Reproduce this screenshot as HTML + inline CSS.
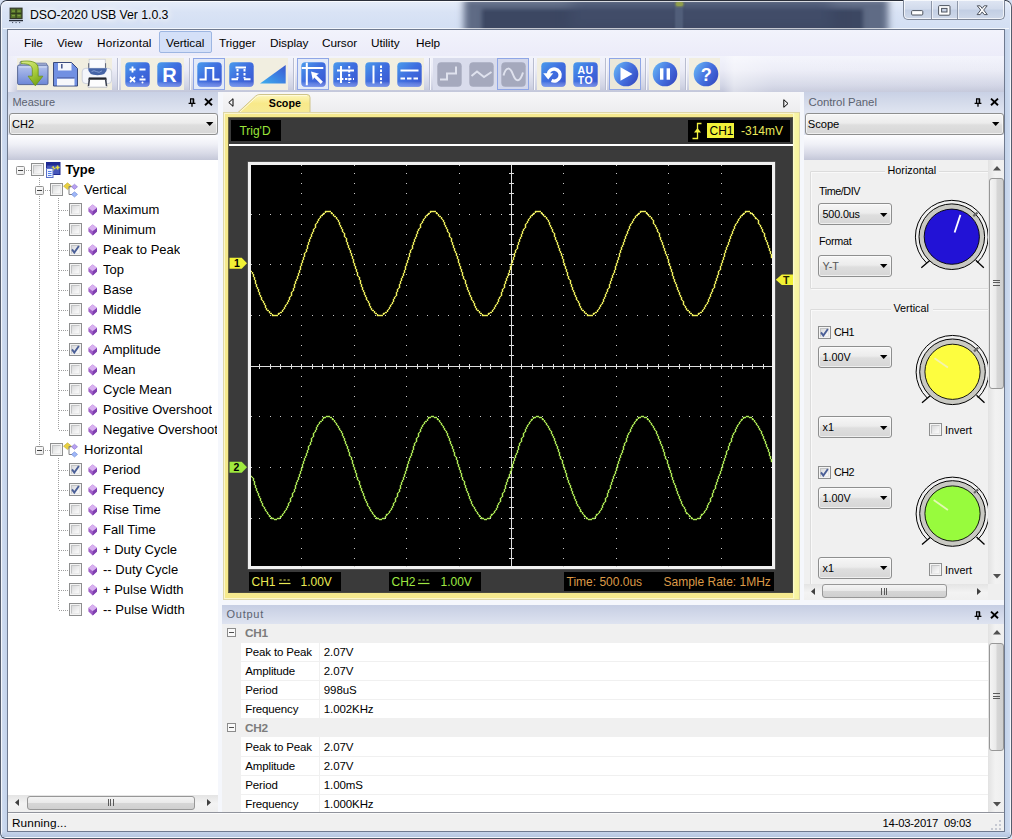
<!DOCTYPE html>
<html><head><meta charset="utf-8"><title>DSO-2020 USB Ver 1.0.3</title>
<style>
html,body{margin:0;padding:0;}
body{width:1012px;height:839px;overflow:hidden;position:relative;background:#d6e0f2;font-family:"Liberation Sans","DejaVu Sans",sans-serif;font-size:12px;color:#000;}
div{position:absolute;box-sizing:border-box;}
svg{position:absolute;overflow:visible;}
.t{white-space:nowrap;line-height:16px;height:16px;}
.s{font-family:"Liberation Sans",sans-serif;font-size:11.8px;letter-spacing:-0.05px;}
.tr{font-family:"Liberation Sans",sans-serif;font-size:13px;}
.a{font-family:"Liberation Sans",sans-serif;font-size:12px;}
.c{font-family:"Liberation Sans",sans-serif;font-size:10.8px;}
.b{font-weight:bold;}
</style></head>
<body>
<div style="left:0px;top:0px;width:1012px;height:839px;background:#cfdcf0;border-radius:7px 7px 6px 6px;"></div>
<div style="left:1px;top:1px;width:1010px;height:28px;border-radius:6px 6px 0 0;overflow:hidden;background:linear-gradient(180deg,#e6edf9 0,#d9e3f5 40%,#d3dff3 100%);"><div style="left:471px;top:5px;width:408px;height:30px;background:#5f6b85;box-shadow:0 0 7px 8px #5f6b85;"></div><div style="left:484px;top:11px;width:375px;height:24px;background:#3c4762;box-shadow:0 0 4px 3px #3c4762;"></div><div style="left:580px;top:10px;width:240px;height:8px;background:#434f6c;box-shadow:0 0 14px 10px #434f6c;opacity:.7;"></div><div style="left:675px;top:4px;width:6px;height:24px;background:#56637f;box-shadow:0 0 2px 1px #56637f;opacity:.8;"></div><div style="left:674.5px;top:1px;width:7px;height:3.5px;background:#97a548;box-shadow:0 0 2px 1px #7f8d52;border-radius:2px;opacity:.9;"></div></div>
<div style="left:0px;top:0px;width:1012px;height:839px;border:1px solid #3d4452;border-radius:7px 7px 6px 6px;border-color:#2a2f3a #555d6d #4a5262 #555d6d;"></div>
<div style="left:1px;top:1px;width:1010px;height:837px;border:1px solid rgba(255,255,255,.75);border-radius:6px;"></div>
<div style="left:2px;top:30px;width:5px;height:802px;background:linear-gradient(90deg,#cfdcf0,#c2d2ea);"></div>
<div style="left:1005px;top:30px;width:5px;height:802px;background:linear-gradient(90deg,#c2d2ea,#cfdcf0);"></div>
<div style="left:2px;top:831.5px;width:1008px;height:5.5px;background:linear-gradient(180deg,#c6d4ea,#b5c6e0);"></div>
<div style="left:3px;top:28px;width:1006px;height:1px;background:rgba(255,255,255,.7);"></div>
<div style="left:7px;top:29px;width:998px;height:803px;border:1px solid #6f7a8f;background:#f0f0f0;"></div>
<div class="t s" style="left:30px;top:7px;font-size:12.3px;text-shadow:0 0 5px #fff,0 0 9px #fff,0 0 12px rgba(255,255,255,.8);">DSO-2020 USB Ver 1.0.3</div>
<svg style="left:8px;top:7px;" width="16" height="17" viewBox="0 0 16 17"><rect x="2.2" y="1.2" width="11.8" height="10.4" fill="#53702a" stroke="#33372a" stroke-width="1.2"/>
<path d="M8.1 2v9M3 6.4h10.4" stroke="#2e3a1c" stroke-width="1"/><path d="M4 4.2h3M9.5 4.2h3M4 8.6h3M9.5 8.6h3" stroke="#7f9e3e" stroke-width="1.2"/>
<path d="M1 13.6h14" stroke="#252b36" stroke-width="1.3"/><path d="M4 15.6h1.2M7.5 15.6h1.2M11 15.6h1.2" stroke="#4a5468" stroke-width="1"/></svg>
<div style="left:902.5px;top:0px;width:102.5px;height:19.5px;border:1px solid #7e8798;border-top:none;border-radius:0 0 5px 5px;background:linear-gradient(180deg,#dfe6f3 0,#d2dbec 45%,#c3cfe4 55%,#cfd9ea 100%);box-shadow:inset 0 0 0 1px rgba(255,255,255,.7);"></div>
<div style="left:930.5px;top:1px;width:1px;height:18px;background:#8d96a8;"></div>
<div style="left:931.5px;top:1px;width:1px;height:18px;background:rgba(255,255,255,.6);"></div>
<div style="left:957px;top:1px;width:1px;height:18px;background:#8d96a8;"></div>
<div style="left:958px;top:1px;width:1px;height:18px;background:rgba(255,255,255,.6);"></div>
<svg style="left:911px;top:9.5px;" width="13" height="6" viewBox="0 0 13 6"><rect x=".6" y=".6" width="11.2" height="4.4" rx="1" fill="#fff" stroke="#4e545f" stroke-width="1"/></svg>
<svg style="left:937.5px;top:4.5px;" width="13" height="11" viewBox="0 0 13 11"><rect x=".6" y=".6" width="11.4" height="9.6" rx="1" fill="#fff" stroke="#4e545f" stroke-width="1"/><rect x="3.6" y="3.4" width="5.4" height="3.6" fill="#c9d3e6" stroke="#4e545f" stroke-width="1"/></svg>
<svg style="left:975.5px;top:4.8px;" width="13" height="11" viewBox="0 0 13 11"><path d="M1.2 .8h3l2 2.6 2-2.6h3L7.7 5l3.6 4.6h-3.1L6.2 6.9 4.2 9.6H1.1L4.7 5z" fill="#fff" stroke="#4e545f" stroke-width="1" stroke-linejoin="round"/></svg>
<div style="left:8px;top:30px;width:996px;height:26px;background:linear-gradient(180deg,#f2f3fc,#ececf9);"></div>
<div style="left:159px;top:31px;width:53px;height:22px;background:#d4e0f8;border:1px solid #9db6e2;border-radius:2px;"></div>
<div class="t s" style="left:24px;top:35px;">File</div>
<div class="t s" style="left:57px;top:35px;">View</div>
<div class="t s" style="left:97px;top:35px;letter-spacing:.15px;">Horizontal</div>
<div class="t s" style="left:166px;top:35px;">Vertical</div>
<div class="t s" style="left:219px;top:35px;">Trigger</div>
<div class="t s" style="left:270px;top:35px;">Display</div>
<div class="t s" style="left:322px;top:35px;">Cursor</div>
<div class="t s" style="left:371px;top:35px;">Utility</div>
<div class="t s" style="left:416px;top:35px;">Help</div>
<div style="left:8px;top:56px;width:996px;height:36px;background:linear-gradient(90deg,rgba(255,255,255,0) 715px,rgba(255,255,255,.4) 726px,rgba(255,255,255,.12) 765px,rgba(255,255,255,.03) 100%),linear-gradient(180deg,#f3f4fc 0,#eaebf6 40%,#d3d6e6 80%,#c3c7da 100%);"></div>
<div style="left:8px;top:56px;width:10px;height:36px;background:linear-gradient(90deg,#eeeef8,rgba(238,238,248,0));"></div>
<div style="left:17px;top:58px;width:95px;height:31.5px;background:#f1eee0;"></div>
<div style="left:121px;top:58px;width:63px;height:31.5px;background:#f1eee0;"></div>
<div style="left:193px;top:58px;width:95px;height:31.5px;background:#f1eee0;"></div>
<div style="left:297px;top:58px;width:127px;height:31.5px;background:#f1eee0;"></div>
<div style="left:433px;top:58px;width:95px;height:31.5px;background:#d9dcec;"></div>
<div style="left:537px;top:58px;width:63px;height:31.5px;background:#f1eee0;"></div>
<div style="left:609px;top:58px;width:31px;height:31.5px;background:#f1eee0;"></div>
<div style="left:649px;top:58px;width:31px;height:31.5px;background:#f1eee0;"></div>
<div style="left:689px;top:58px;width:31px;height:31.5px;background:#f1eee0;"></div>
<div style="left:117px;top:58px;width:1px;height:32px;background:#b9bdd0;"></div>
<div style="left:118px;top:58px;width:1px;height:32px;background:#f6f7fd;"></div>
<div style="left:189px;top:58px;width:1px;height:32px;background:#b9bdd0;"></div>
<div style="left:190px;top:58px;width:1px;height:32px;background:#f6f7fd;"></div>
<div style="left:293px;top:58px;width:1px;height:32px;background:#b9bdd0;"></div>
<div style="left:294px;top:58px;width:1px;height:32px;background:#f6f7fd;"></div>
<div style="left:429px;top:58px;width:1px;height:32px;background:#b9bdd0;"></div>
<div style="left:430px;top:58px;width:1px;height:32px;background:#f6f7fd;"></div>
<div style="left:533px;top:58px;width:1px;height:32px;background:#b9bdd0;"></div>
<div style="left:534px;top:58px;width:1px;height:32px;background:#f6f7fd;"></div>
<div style="left:605px;top:58px;width:1px;height:32px;background:#b9bdd0;"></div>
<div style="left:606px;top:58px;width:1px;height:32px;background:#f6f7fd;"></div>
<div style="left:645px;top:58px;width:1px;height:32px;background:#b9bdd0;"></div>
<div style="left:646px;top:58px;width:1px;height:32px;background:#f6f7fd;"></div>
<div style="left:685px;top:58px;width:1px;height:32px;background:#b9bdd0;"></div>
<div style="left:686px;top:58px;width:1px;height:32px;background:#f6f7fd;"></div>
<div style="left:193px;top:58px;width:32px;height:32px;background:#e3eaf8;border:1px solid #8fa6e6;"></div>
<div style="left:297px;top:58px;width:32px;height:32px;background:#e3eaf8;border:1px solid #8fa6e6;"></div>
<div style="left:497px;top:58px;width:32px;height:32px;background:#d3d7ea;border:1px solid #8fa6e6;"></div>
<div style="left:609px;top:58px;width:32px;height:32px;background:#ebe8da;border:1px solid #8fa6e6;"></div>
<svg width="0" height="0" style="left:0;top:0"><defs>
<linearGradient id="gb" x1="0" y1="0" x2="1" y2="1"><stop offset="0" stop-color="#4a9cec"/><stop offset=".45" stop-color="#3f6fe0"/><stop offset="1" stop-color="#3a55cf"/></linearGradient>
<linearGradient id="gbb" x1="0" y1="0" x2="0" y2="1"><stop offset="0" stop-color="#fff" stop-opacity="0"/><stop offset=".78" stop-color="#fff" stop-opacity="0"/><stop offset="1" stop-color="#9ab4ff" stop-opacity=".55"/></linearGradient>
<linearGradient id="gc" x1="0" y1=".2" x2="1" y2=".8"><stop offset="0" stop-color="#66b4f4"/><stop offset=".5" stop-color="#4672e0"/><stop offset="1" stop-color="#3448c0"/></linearGradient>
<linearGradient id="gr" x1="0" y1="1" x2="1" y2="0"><stop offset="0" stop-color="#3fb0ee"/><stop offset=".6" stop-color="#3c7ae0"/><stop offset="1" stop-color="#3a58cc"/></linearGradient>
<linearGradient id="gf" x1="0" y1="0" x2="0" y2="1"><stop offset="0" stop-color="#b6c4ec"/><stop offset="1" stop-color="#6d87d8"/></linearGradient>
<linearGradient id="gar" x1="0" y1="0" x2=".6" y2="1"><stop offset="0" stop-color="#dcec8c"/><stop offset=".55" stop-color="#aed040"/><stop offset="1" stop-color="#7aa81a"/></linearGradient>
</defs></svg>
<svg style="left:17px;top:58px;" width="32" height="32" viewBox="0 0 32 32"><path d="M3 8.5V4.7q0-1.2 1.3-1.2h8l2 1.7h14.3q1.2 0 1.2 1.2v2.1z" fill="#c3cef0" stroke="#55659a" stroke-width=".8"/>
<rect x=".6" y="7.1" width="30.4" height="19.5" rx="1.3" fill="url(#gf)" stroke="#4c5c90" stroke-width=".9"/>
<path d="M2.2 9h27.4" stroke="#dfe6f8" stroke-width="1" opacity=".8"/>
<path d="M4 3.4C12 2.3 21.2 3 21.2 10.5V18.2H25.9L18.3 27.8L11.1 18.2H15.3V11.5C15.3 7.3 11 5.6 4 5.6Z" fill="url(#gar)" stroke="#6d9418" stroke-width=".8" stroke-linejoin="round"/></svg>
<svg style="left:49px;top:58px;" width="32" height="32" viewBox="0 0 32 32"><path d="M4.5 4.5 h18 l6 6 v17.5 h-24z" fill="#7190e2" stroke="#3a4a7c" stroke-width="1"/>
<rect x="9" y="5" width="13.5" height="7.5" fill="#f4f6fc"/><rect x="12" y="6" width="1.6" height="4.5" fill="#4a5a90"/>
<rect x="8" y="20.5" width="17.5" height="7" fill="#f6f7fb"/><rect x="8" y="19" width="17.5" height="1.5" fill="#5a70b8"/></svg>
<svg style="left:81px;top:58px;" width="32" height="32" viewBox="0 0 32 32"><rect x="8.1" y="1.2" width="16.1" height="9.4" fill="#fafbfe" stroke="#bcc0cc" stroke-width=".6"/>
<path d="M7.7 5.2V10.5M24.6 5.2V10.5" stroke="#5a6274" stroke-width="1"/>
<rect x="1.2" y="10.3" width="29.4" height="15.3" rx="3.6" fill="#f4f6fb" stroke="#c2c7d6" stroke-width=".8"/>
<path d="M7.1 10.3H25.9Q25.9 17.3 16.5 17.3Q7.1 17.3 7.1 10.3Z" fill="#4564a6"/>
<path d="M10.5 13.6q2.5-1.8 5 0t5.5-.8" fill="none" stroke="#90a8dc" stroke-width=".8"/>
<path d="M8.2 19.8H24.8L26 29.2H7Z" fill="#fdfdfe" stroke="#9aa0b0" stroke-width=".6"/>
<path d="M7.8 19.6h17.4l.5 2.1H7.3z" fill="#22262e"/>
<path d="M8.4 21.3L7.5 28M24.6 21.3L25.5 28" stroke="#3a4050" stroke-width="1.5"/></svg>
<svg style="left:125px;top:62px;" width="25" height="25" viewBox="0 0 25 25"><rect x=".3" y=".3" width="24.4" height="24.4" rx="4" fill="url(#gb)"/><rect x=".3" y=".3" width="24.4" height="24.4" rx="4" fill="url(#gbb)"/><g stroke="#fff" stroke-width="1.8" fill="none"><path d="M4.5 7.5h6M7.5 4.5v6M14.5 7.5h6M5 15l5 5M10 15l-5 5M14.5 17.5h6"/></g><circle cx="17.5" cy="14.6" r="1" fill="#fff"/><circle cx="17.5" cy="20.4" r="1" fill="#fff"/></svg>
<svg style="left:157px;top:62px;" width="25" height="25" viewBox="0 0 25 25"><rect x=".3" y=".3" width="24.4" height="24.4" rx="4" fill="url(#gb)"/><rect x=".3" y=".3" width="24.4" height="24.4" rx="4" fill="url(#gbb)"/><text x="12.6" y="20.2" text-anchor="middle" font-family="Liberation Sans, sans-serif" font-weight="bold" font-size="20" fill="#fff">R</text></svg>
<svg style="left:197px;top:62px;" width="25" height="25" viewBox="0 0 25 25"><rect x=".3" y=".3" width="24.4" height="24.4" rx="4" fill="url(#gb)"/><rect x=".3" y=".3" width="24.4" height="24.4" rx="4" fill="url(#gbb)"/><path d="M2.5 17.5h6.2v-11.5h7.6v11.5h6.2" fill="none" stroke="#fff" stroke-width="2"/></svg>
<svg style="left:229px;top:62px;" width="25" height="25" viewBox="0 0 25 25"><rect x=".3" y=".3" width="24.4" height="24.4" rx="4" fill="url(#gb)"/><rect x=".3" y=".3" width="24.4" height="24.4" rx="4" fill="url(#gbb)"/><path d="M6.5 5.5h10.5" fill="none" stroke="#fff" stroke-width="2"/><path d="M2.5 17.2h6.5M15 17.2h6.5" fill="none" stroke="#fff" stroke-width="2"/><path d="M8.5 7v9.5M15.5 7v9.5" fill="none" stroke="#fff" stroke-width="2" stroke-dasharray="2.4 1.6"/></svg>
<svg style="left:257px;top:58px;" width="32" height="32" viewBox="0 0 32 32"><path d="M3 25.5 L28.7 25.5 L28.7 7z" fill="url(#gr)"/></svg>
<svg style="left:301px;top:61.5px;" width="25" height="25" viewBox="0 0 25 25"><rect x=".3" y=".3" width="24.4" height="24.4" rx="4" fill="url(#gb)"/><rect x=".3" y=".3" width="24.4" height="24.4" rx="4" fill="url(#gbb)"/><path d="M5.8 .8v22.5M.8 6h21.5" fill="none" stroke="#fff" stroke-width="2"/><path d="M10 9.5l8 2.2-2.6 1.6 6.5 6.5-2.2 2.2-6.5-6.5-1.4 2.4z" fill="#fff"/></svg>
<svg style="left:333px;top:62px;" width="25" height="25" viewBox="0 0 25 25"><rect x=".3" y=".3" width="24.4" height="24.4" rx="4" fill="url(#gb)"/><rect x=".3" y=".3" width="24.4" height="24.4" rx="4" fill="url(#gbb)"/><path d="M8 4v17M4 8.5h17" fill="none" stroke="#fff" stroke-width="2"/><path d="M16.2 4v17M4 17h17" fill="none" stroke="#fff" stroke-width="2" stroke-dasharray="2.4 1.6"/></svg>
<svg style="left:365px;top:62px;" width="25" height="25" viewBox="0 0 25 25"><rect x=".3" y=".3" width="24.4" height="24.4" rx="4" fill="url(#gb)"/><rect x=".3" y=".3" width="24.4" height="24.4" rx="4" fill="url(#gbb)"/><path d="M8.5 3.5v18" fill="none" stroke="#fff" stroke-width="2"/><path d="M16 3.5v18" fill="none" stroke="#fff" stroke-width="2" stroke-dasharray="2.4 1.6"/></svg>
<svg style="left:397px;top:62px;" width="25" height="25" viewBox="0 0 25 25"><rect x=".3" y=".3" width="24.4" height="24.4" rx="4" fill="url(#gb)"/><rect x=".3" y=".3" width="24.4" height="24.4" rx="4" fill="url(#gbb)"/><path d="M3.5 8.5h18" fill="none" stroke="#fff" stroke-width="2"/><path d="M3.5 16.5h18" fill="none" stroke="#fff" stroke-width="2" stroke-dasharray="4.5 2"/></svg>
<svg style="left:437px;top:62px;" width="25" height="25" viewBox="0 0 25 25"><rect x=".3" y=".3" width="24.4" height="24.4" rx="4" fill="#a5a9bd"/><path d="M3 17.5h7v-6h9v-7" fill="none" stroke="#dfe2ee" stroke-width="2"/></svg>
<svg style="left:469px;top:62px;" width="25" height="25" viewBox="0 0 25 25"><rect x=".3" y=".3" width="24.4" height="24.4" rx="4" fill="#a5a9bd"/><path d="M2.5 14l5.5-4.5 7 5.5 7.5-5" fill="none" stroke="#dfe2ee" stroke-width="2" stroke-width="1.7"/></svg>
<svg style="left:501px;top:62px;" width="25" height="25" viewBox="0 0 25 25"><rect x=".3" y=".3" width="24.4" height="24.4" rx="4" fill="#a5a9bd"/><path d="M2.5 13.5c2.5-9 6.5-9 9.5-1s7 8 10-2" fill="none" stroke="#dfe2ee" stroke-width="2" stroke-width="1.7"/></svg>
<svg style="left:541px;top:62px;" width="25" height="25" viewBox="0 0 25 25"><rect x=".3" y=".3" width="24.4" height="24.4" rx="4" fill="url(#gb)"/><rect x=".3" y=".3" width="24.4" height="24.4" rx="4" fill="url(#gbb)"/><path d="M7.2 12.5a6 6 0 1 1 3.4 6" fill="none" stroke="#fff" stroke-width="3.4"/><path d="M2.2 11.2h10l-5 6.3z" fill="#fff"/></svg>
<svg style="left:573px;top:62px;" width="25" height="25" viewBox="0 0 25 25"><rect x=".3" y=".3" width="24.4" height="24.4" rx="4" fill="url(#gb)"/><rect x=".3" y=".3" width="24.4" height="24.4" rx="4" fill="url(#gbb)"/><text x="12.6" y="11.6" text-anchor="middle" font-family="Liberation Sans, sans-serif" font-weight="bold" font-size="10.5" fill="#fff" letter-spacing=".6">AU</text><text x="12.6" y="21.6" text-anchor="middle" font-family="Liberation Sans, sans-serif" font-weight="bold" font-size="10.5" fill="#fff" letter-spacing=".6">TO</text></svg>
<svg style="left:612.5px;top:61px;" width="26" height="26" viewBox="0 0 26 26"><circle cx="13" cy="13" r="12.3" fill="url(#gc)"/><path d="M7.5 6.2v13.6l12-6.8z" fill="#fff"/></svg>
<svg style="left:652px;top:61px;" width="26" height="26" viewBox="0 0 26 26"><circle cx="13" cy="13" r="12.3" fill="url(#gc)"/><rect x="8" y="7.3" width="3.4" height="11.4" fill="#fff"/><rect x="14.6" y="7.3" width="3.4" height="11.4" fill="#fff"/></svg>
<svg style="left:692.5px;top:61px;" width="26" height="26" viewBox="0 0 26 26"><circle cx="13" cy="13" r="12.3" fill="url(#gc)"/><text x="13.2" y="19.8" text-anchor="middle" font-family="Liberation Sans, sans-serif" font-weight="bold" font-size="18" fill="#fff">?</text></svg>
<div style="left:8px;top:92px;width:210px;height:720px;background:#fff;"></div>
<div style="left:217px;top:92px;width:5.5px;height:720px;background:#f5f7fc;"></div>
<div style="left:217px;top:159.5px;width:1px;height:652px;background:#ccd0da;"></div>
<div style="left:8px;top:92px;width:210px;height:20px;background:linear-gradient(180deg,#c9d1e5,#dfe4f0);"></div>
<div class="t s" style="left:12.5px;top:94px;color:#5b6270;font-size:11px;">Measure</div>
<svg style="left:188px;top:98.4px;" width="8" height="9" viewBox="0 0 8 9"><path d="M2 .8h4M2.6 .8v4.2M5.6 .8v4.2M.6 5.4h6.8M4 5.4v3.4" fill="none" stroke="#000" stroke-width="1.3"/><rect x="4.6" y="1" width="1.2" height="4" fill="#000"/></svg>
<svg style="left:204px;top:98.4px;" width="9" height="8" viewBox="0 0 9 8"><path d="M1 .6l7 6.6M8 .6l-7 6.6" fill="none" stroke="#000" stroke-width="1.9"/></svg>
<div style="left:8px;top:112px;width:210px;height:23px;background:#dfe4f0;"></div>
<div style="left:8.5px;top:112.5px;width:209px;height:22px;border:1px solid #8e8f8f;border-radius:3px;background:linear-gradient(180deg,#f6f6f6 0,#ececec 45%,#dedede 55%,#d6d6d6 100%);box-shadow:inset 0 0 0 1px rgba(255,255,255,.6);"></div>
<div class="t a" style="left:12.0px;top:115.5px;font-size:11px;">CH2</div>
<svg style="left:206px;top:121.9px;" width="8" height="4" viewBox="0 0 8 4"><path d="M0 0h7.4l-3.7 4z" fill="#000"/></svg>
<div style="left:8px;top:134.5px;width:210px;height:25px;background:linear-gradient(180deg,#fdfdff 0,#f0f1f7 35%,#d7d9e6 75%,#c4c7d8 100%);"></div>
<div style="left:8px;top:159.5px;width:210px;height:636px;background:#fff;"></div>
<div style="left:39px;top:178px;width:1px;height:268px;background:repeating-linear-gradient(180deg,#a0a0a0 0,#a0a0a0 1px,transparent 1px,transparent 2px);"></div>
<div style="left:58px;top:198px;width:1px;height:232px;background:repeating-linear-gradient(180deg,#a0a0a0 0,#a0a0a0 1px,transparent 1px,transparent 2px);"></div>
<div style="left:58px;top:458px;width:1px;height:152px;background:repeating-linear-gradient(180deg,#a0a0a0 0,#a0a0a0 1px,transparent 1px,transparent 2px);"></div>
<div style="left:26px;top:170px;width:5px;height:1px;background:repeating-linear-gradient(90deg,#a0a0a0 0,#a0a0a0 1px,transparent 1px,transparent 2px);"></div>
<div style="left:45px;top:190px;width:5px;height:1px;background:repeating-linear-gradient(90deg,#a0a0a0 0,#a0a0a0 1px,transparent 1px,transparent 2px);"></div>
<div style="left:45px;top:450px;width:5px;height:1px;background:repeating-linear-gradient(90deg,#a0a0a0 0,#a0a0a0 1px,transparent 1px,transparent 2px);"></div>
<div style="left:8px;top:159.5px;width:209px;height:636px;overflow:hidden;"><!--tree--></div>
<div style="left:16px;top:166px;width:9px;height:9px;border:1px solid #919191;border-radius:1.5px;background:linear-gradient(135deg,#fff,#e8e8e8);"></div>
<div style="left:18px;top:170px;width:5px;height:1px;background:#404040;"></div>
<div style="left:31px;top:163px;width:13px;height:13px;border:1px solid #8e8f8f;background:#f4f4f4;"></div>
<div style="left:33px;top:165px;width:9px;height:9px;background:linear-gradient(135deg,#d9dadb,#f6f6f6 80%);border:1px solid #c3c4c5;border-right-color:#e8e8e8;border-bottom-color:#e8e8e8;"></div>
<svg style="left:45px;top:162px;" width="16" height="16" viewBox="0 0 16 16"><rect x="1.5" y=".5" width="13.5" height="12" fill="#4656ba" stroke="#1f2b92" stroke-width="1"/><rect x="1.5" y=".5" width="13.5" height="3" fill="#1f2b92"/><path d="M6 6.5h4.4M8.2 4.3v4.4M10.6 5.5h4M12.6 3.5v4" stroke="#e6df3c" stroke-width="1.5"/><rect x="1.5" y="6.5" width="6.5" height="9" fill="#eef2ff" stroke="#5a70c8" stroke-width="1"/><path d="M3 9.5h3.5M3 11.5h3.5M3 13.5h3.5" stroke="#4f7fe6" stroke-width="1"/></svg>
<div class="t tr" style="left:65.5px;top:161.5px;font-weight:bold;">Type</div>
<div style="left:35px;top:186px;width:9px;height:9px;border:1px solid #919191;border-radius:1.5px;background:linear-gradient(135deg,#fff,#e8e8e8);"></div>
<div style="left:37px;top:190px;width:5px;height:1px;background:#404040;"></div>
<div style="left:50px;top:183px;width:13px;height:13px;border:1px solid #8e8f8f;background:#f4f4f4;"></div>
<div style="left:52px;top:185px;width:9px;height:9px;background:linear-gradient(135deg,#d9dadb,#f6f6f6 80%);border:1px solid #c3c4c5;border-right-color:#e8e8e8;border-bottom-color:#e8e8e8;"></div>
<svg style="left:63px;top:182px;" width="16" height="16" viewBox="0 0 16 16"><path d="M4.5 .8l4 3.4-4 3.4-4-3.4z" fill="#e8d040" stroke="#b8a020" stroke-width=".5"/><path d="M8.5 4.5h-2.5v8h3" fill="none" stroke="#808080" stroke-width="1"/><path d="M11.5 2.2l3 2.6-3 2.6-3-2.6z" fill="#b8a0f0" stroke="#7060c0" stroke-width=".5"/><path d="M11.5 9.8l3 2.6-3 2.6-3-2.6z" fill="#a0b8f8" stroke="#5070c8" stroke-width=".5"/></svg>
<div class="t tr" style="left:84px;top:181.5px;">Vertical</div>
<div style="left:59px;top:210px;width:10px;height:1px;background:repeating-linear-gradient(90deg,#a0a0a0 0,#a0a0a0 1px,transparent 1px,transparent 2px);"></div>
<div style="left:69px;top:203px;width:13px;height:13px;border:1px solid #8e8f8f;background:#f4f4f4;"></div>
<div style="left:71px;top:205px;width:9px;height:9px;background:linear-gradient(135deg,#d9dadb,#f6f6f6 80%);border:1px solid #c3c4c5;border-right-color:#e8e8e8;border-bottom-color:#e8e8e8;"></div>
<svg style="left:88.3px;top:204px;" width="10" height="12" viewBox="0 0 10 12"><path d="M4.7 .4L9 4v3.6L4.7 11.4.4 7.6V4z" fill="#a060c8"/><path d="M4.7 .4L9 4 4.7 7.2.4 4z" fill="#d8b0f0"/><path d="M4.7 7.2L9 4v3.6L4.7 11.4z" fill="#8040b0"/></svg>
<div class="t tr" style="left:103px;top:201.5px;max-width:114px;overflow:hidden;">Maximum</div>
<div style="left:59px;top:230px;width:10px;height:1px;background:repeating-linear-gradient(90deg,#a0a0a0 0,#a0a0a0 1px,transparent 1px,transparent 2px);"></div>
<div style="left:69px;top:223px;width:13px;height:13px;border:1px solid #8e8f8f;background:#f4f4f4;"></div>
<div style="left:71px;top:225px;width:9px;height:9px;background:linear-gradient(135deg,#d9dadb,#f6f6f6 80%);border:1px solid #c3c4c5;border-right-color:#e8e8e8;border-bottom-color:#e8e8e8;"></div>
<svg style="left:88.3px;top:224px;" width="10" height="12" viewBox="0 0 10 12"><path d="M4.7 .4L9 4v3.6L4.7 11.4.4 7.6V4z" fill="#a060c8"/><path d="M4.7 .4L9 4 4.7 7.2.4 4z" fill="#d8b0f0"/><path d="M4.7 7.2L9 4v3.6L4.7 11.4z" fill="#8040b0"/></svg>
<div class="t tr" style="left:103px;top:221.5px;max-width:114px;overflow:hidden;">Minimum</div>
<div style="left:59px;top:250px;width:10px;height:1px;background:repeating-linear-gradient(90deg,#a0a0a0 0,#a0a0a0 1px,transparent 1px,transparent 2px);"></div>
<div style="left:69px;top:243px;width:13px;height:13px;border:1px solid #8e8f8f;background:#f4f4f4;"></div>
<div style="left:71px;top:245px;width:9px;height:9px;background:linear-gradient(135deg,#d9dadb,#f6f6f6 80%);border:1px solid #c3c4c5;border-right-color:#e8e8e8;border-bottom-color:#e8e8e8;"></div>
<svg style="left:69px;top:243px;" width="13" height="13" viewBox="0 0 13 13"><path d="M3 6.4l2.3 3.2 4.6-6.6" fill="none" stroke="#4b5f97" stroke-width="1.9"/></svg>
<svg style="left:88.3px;top:244px;" width="10" height="12" viewBox="0 0 10 12"><path d="M4.7 .4L9 4v3.6L4.7 11.4.4 7.6V4z" fill="#a060c8"/><path d="M4.7 .4L9 4 4.7 7.2.4 4z" fill="#d8b0f0"/><path d="M4.7 7.2L9 4v3.6L4.7 11.4z" fill="#8040b0"/></svg>
<div class="t tr" style="left:103px;top:241.5px;max-width:114px;overflow:hidden;">Peak to Peak</div>
<div style="left:59px;top:270px;width:10px;height:1px;background:repeating-linear-gradient(90deg,#a0a0a0 0,#a0a0a0 1px,transparent 1px,transparent 2px);"></div>
<div style="left:69px;top:263px;width:13px;height:13px;border:1px solid #8e8f8f;background:#f4f4f4;"></div>
<div style="left:71px;top:265px;width:9px;height:9px;background:linear-gradient(135deg,#d9dadb,#f6f6f6 80%);border:1px solid #c3c4c5;border-right-color:#e8e8e8;border-bottom-color:#e8e8e8;"></div>
<svg style="left:88.3px;top:264px;" width="10" height="12" viewBox="0 0 10 12"><path d="M4.7 .4L9 4v3.6L4.7 11.4.4 7.6V4z" fill="#a060c8"/><path d="M4.7 .4L9 4 4.7 7.2.4 4z" fill="#d8b0f0"/><path d="M4.7 7.2L9 4v3.6L4.7 11.4z" fill="#8040b0"/></svg>
<div class="t tr" style="left:103px;top:261.5px;max-width:114px;overflow:hidden;">Top</div>
<div style="left:59px;top:290px;width:10px;height:1px;background:repeating-linear-gradient(90deg,#a0a0a0 0,#a0a0a0 1px,transparent 1px,transparent 2px);"></div>
<div style="left:69px;top:283px;width:13px;height:13px;border:1px solid #8e8f8f;background:#f4f4f4;"></div>
<div style="left:71px;top:285px;width:9px;height:9px;background:linear-gradient(135deg,#d9dadb,#f6f6f6 80%);border:1px solid #c3c4c5;border-right-color:#e8e8e8;border-bottom-color:#e8e8e8;"></div>
<svg style="left:88.3px;top:284px;" width="10" height="12" viewBox="0 0 10 12"><path d="M4.7 .4L9 4v3.6L4.7 11.4.4 7.6V4z" fill="#a060c8"/><path d="M4.7 .4L9 4 4.7 7.2.4 4z" fill="#d8b0f0"/><path d="M4.7 7.2L9 4v3.6L4.7 11.4z" fill="#8040b0"/></svg>
<div class="t tr" style="left:103px;top:281.5px;max-width:114px;overflow:hidden;">Base</div>
<div style="left:59px;top:310px;width:10px;height:1px;background:repeating-linear-gradient(90deg,#a0a0a0 0,#a0a0a0 1px,transparent 1px,transparent 2px);"></div>
<div style="left:69px;top:303px;width:13px;height:13px;border:1px solid #8e8f8f;background:#f4f4f4;"></div>
<div style="left:71px;top:305px;width:9px;height:9px;background:linear-gradient(135deg,#d9dadb,#f6f6f6 80%);border:1px solid #c3c4c5;border-right-color:#e8e8e8;border-bottom-color:#e8e8e8;"></div>
<svg style="left:88.3px;top:304px;" width="10" height="12" viewBox="0 0 10 12"><path d="M4.7 .4L9 4v3.6L4.7 11.4.4 7.6V4z" fill="#a060c8"/><path d="M4.7 .4L9 4 4.7 7.2.4 4z" fill="#d8b0f0"/><path d="M4.7 7.2L9 4v3.6L4.7 11.4z" fill="#8040b0"/></svg>
<div class="t tr" style="left:103px;top:301.5px;max-width:114px;overflow:hidden;">Middle</div>
<div style="left:59px;top:330px;width:10px;height:1px;background:repeating-linear-gradient(90deg,#a0a0a0 0,#a0a0a0 1px,transparent 1px,transparent 2px);"></div>
<div style="left:69px;top:323px;width:13px;height:13px;border:1px solid #8e8f8f;background:#f4f4f4;"></div>
<div style="left:71px;top:325px;width:9px;height:9px;background:linear-gradient(135deg,#d9dadb,#f6f6f6 80%);border:1px solid #c3c4c5;border-right-color:#e8e8e8;border-bottom-color:#e8e8e8;"></div>
<svg style="left:88.3px;top:324px;" width="10" height="12" viewBox="0 0 10 12"><path d="M4.7 .4L9 4v3.6L4.7 11.4.4 7.6V4z" fill="#a060c8"/><path d="M4.7 .4L9 4 4.7 7.2.4 4z" fill="#d8b0f0"/><path d="M4.7 7.2L9 4v3.6L4.7 11.4z" fill="#8040b0"/></svg>
<div class="t tr" style="left:103px;top:321.5px;max-width:114px;overflow:hidden;">RMS</div>
<div style="left:59px;top:350px;width:10px;height:1px;background:repeating-linear-gradient(90deg,#a0a0a0 0,#a0a0a0 1px,transparent 1px,transparent 2px);"></div>
<div style="left:69px;top:343px;width:13px;height:13px;border:1px solid #8e8f8f;background:#f4f4f4;"></div>
<div style="left:71px;top:345px;width:9px;height:9px;background:linear-gradient(135deg,#d9dadb,#f6f6f6 80%);border:1px solid #c3c4c5;border-right-color:#e8e8e8;border-bottom-color:#e8e8e8;"></div>
<svg style="left:69px;top:343px;" width="13" height="13" viewBox="0 0 13 13"><path d="M3 6.4l2.3 3.2 4.6-6.6" fill="none" stroke="#4b5f97" stroke-width="1.9"/></svg>
<svg style="left:88.3px;top:344px;" width="10" height="12" viewBox="0 0 10 12"><path d="M4.7 .4L9 4v3.6L4.7 11.4.4 7.6V4z" fill="#a060c8"/><path d="M4.7 .4L9 4 4.7 7.2.4 4z" fill="#d8b0f0"/><path d="M4.7 7.2L9 4v3.6L4.7 11.4z" fill="#8040b0"/></svg>
<div class="t tr" style="left:103px;top:341.5px;max-width:114px;overflow:hidden;">Amplitude</div>
<div style="left:59px;top:370px;width:10px;height:1px;background:repeating-linear-gradient(90deg,#a0a0a0 0,#a0a0a0 1px,transparent 1px,transparent 2px);"></div>
<div style="left:69px;top:363px;width:13px;height:13px;border:1px solid #8e8f8f;background:#f4f4f4;"></div>
<div style="left:71px;top:365px;width:9px;height:9px;background:linear-gradient(135deg,#d9dadb,#f6f6f6 80%);border:1px solid #c3c4c5;border-right-color:#e8e8e8;border-bottom-color:#e8e8e8;"></div>
<svg style="left:88.3px;top:364px;" width="10" height="12" viewBox="0 0 10 12"><path d="M4.7 .4L9 4v3.6L4.7 11.4.4 7.6V4z" fill="#a060c8"/><path d="M4.7 .4L9 4 4.7 7.2.4 4z" fill="#d8b0f0"/><path d="M4.7 7.2L9 4v3.6L4.7 11.4z" fill="#8040b0"/></svg>
<div class="t tr" style="left:103px;top:361.5px;max-width:114px;overflow:hidden;">Mean</div>
<div style="left:59px;top:390px;width:10px;height:1px;background:repeating-linear-gradient(90deg,#a0a0a0 0,#a0a0a0 1px,transparent 1px,transparent 2px);"></div>
<div style="left:69px;top:383px;width:13px;height:13px;border:1px solid #8e8f8f;background:#f4f4f4;"></div>
<div style="left:71px;top:385px;width:9px;height:9px;background:linear-gradient(135deg,#d9dadb,#f6f6f6 80%);border:1px solid #c3c4c5;border-right-color:#e8e8e8;border-bottom-color:#e8e8e8;"></div>
<svg style="left:88.3px;top:384px;" width="10" height="12" viewBox="0 0 10 12"><path d="M4.7 .4L9 4v3.6L4.7 11.4.4 7.6V4z" fill="#a060c8"/><path d="M4.7 .4L9 4 4.7 7.2.4 4z" fill="#d8b0f0"/><path d="M4.7 7.2L9 4v3.6L4.7 11.4z" fill="#8040b0"/></svg>
<div class="t tr" style="left:103px;top:381.5px;max-width:114px;overflow:hidden;">Cycle Mean</div>
<div style="left:59px;top:410px;width:10px;height:1px;background:repeating-linear-gradient(90deg,#a0a0a0 0,#a0a0a0 1px,transparent 1px,transparent 2px);"></div>
<div style="left:69px;top:403px;width:13px;height:13px;border:1px solid #8e8f8f;background:#f4f4f4;"></div>
<div style="left:71px;top:405px;width:9px;height:9px;background:linear-gradient(135deg,#d9dadb,#f6f6f6 80%);border:1px solid #c3c4c5;border-right-color:#e8e8e8;border-bottom-color:#e8e8e8;"></div>
<svg style="left:88.3px;top:404px;" width="10" height="12" viewBox="0 0 10 12"><path d="M4.7 .4L9 4v3.6L4.7 11.4.4 7.6V4z" fill="#a060c8"/><path d="M4.7 .4L9 4 4.7 7.2.4 4z" fill="#d8b0f0"/><path d="M4.7 7.2L9 4v3.6L4.7 11.4z" fill="#8040b0"/></svg>
<div class="t tr" style="left:103px;top:401.5px;max-width:114px;overflow:hidden;">Positive Overshoot</div>
<div style="left:59px;top:430px;width:10px;height:1px;background:repeating-linear-gradient(90deg,#a0a0a0 0,#a0a0a0 1px,transparent 1px,transparent 2px);"></div>
<div style="left:69px;top:423px;width:13px;height:13px;border:1px solid #8e8f8f;background:#f4f4f4;"></div>
<div style="left:71px;top:425px;width:9px;height:9px;background:linear-gradient(135deg,#d9dadb,#f6f6f6 80%);border:1px solid #c3c4c5;border-right-color:#e8e8e8;border-bottom-color:#e8e8e8;"></div>
<svg style="left:88.3px;top:424px;" width="10" height="12" viewBox="0 0 10 12"><path d="M4.7 .4L9 4v3.6L4.7 11.4.4 7.6V4z" fill="#a060c8"/><path d="M4.7 .4L9 4 4.7 7.2.4 4z" fill="#d8b0f0"/><path d="M4.7 7.2L9 4v3.6L4.7 11.4z" fill="#8040b0"/></svg>
<div class="t tr" style="left:103px;top:421.5px;max-width:114px;overflow:hidden;">Negative Overshoot</div>
<div style="left:35px;top:446px;width:9px;height:9px;border:1px solid #919191;border-radius:1.5px;background:linear-gradient(135deg,#fff,#e8e8e8);"></div>
<div style="left:37px;top:450px;width:5px;height:1px;background:#404040;"></div>
<div style="left:50px;top:443px;width:13px;height:13px;border:1px solid #8e8f8f;background:#f4f4f4;"></div>
<div style="left:52px;top:445px;width:9px;height:9px;background:linear-gradient(135deg,#d9dadb,#f6f6f6 80%);border:1px solid #c3c4c5;border-right-color:#e8e8e8;border-bottom-color:#e8e8e8;"></div>
<svg style="left:63px;top:442px;" width="16" height="16" viewBox="0 0 16 16"><path d="M4.5 .8l4 3.4-4 3.4-4-3.4z" fill="#e8d040" stroke="#b8a020" stroke-width=".5"/><path d="M8.5 4.5h-2.5v8h3" fill="none" stroke="#808080" stroke-width="1"/><path d="M11.5 2.2l3 2.6-3 2.6-3-2.6z" fill="#b8a0f0" stroke="#7060c0" stroke-width=".5"/><path d="M11.5 9.8l3 2.6-3 2.6-3-2.6z" fill="#a0b8f8" stroke="#5070c8" stroke-width=".5"/></svg>
<div class="t tr" style="left:84px;top:441.5px;">Horizontal</div>
<div style="left:59px;top:470px;width:10px;height:1px;background:repeating-linear-gradient(90deg,#a0a0a0 0,#a0a0a0 1px,transparent 1px,transparent 2px);"></div>
<div style="left:69px;top:463px;width:13px;height:13px;border:1px solid #8e8f8f;background:#f4f4f4;"></div>
<div style="left:71px;top:465px;width:9px;height:9px;background:linear-gradient(135deg,#d9dadb,#f6f6f6 80%);border:1px solid #c3c4c5;border-right-color:#e8e8e8;border-bottom-color:#e8e8e8;"></div>
<svg style="left:69px;top:463px;" width="13" height="13" viewBox="0 0 13 13"><path d="M3 6.4l2.3 3.2 4.6-6.6" fill="none" stroke="#4b5f97" stroke-width="1.9"/></svg>
<svg style="left:88.3px;top:464px;" width="10" height="12" viewBox="0 0 10 12"><path d="M4.7 .4L9 4v3.6L4.7 11.4.4 7.6V4z" fill="#a060c8"/><path d="M4.7 .4L9 4 4.7 7.2.4 4z" fill="#d8b0f0"/><path d="M4.7 7.2L9 4v3.6L4.7 11.4z" fill="#8040b0"/></svg>
<div class="t tr" style="left:103px;top:461.5px;max-width:114px;overflow:hidden;">Period</div>
<div style="left:59px;top:490px;width:10px;height:1px;background:repeating-linear-gradient(90deg,#a0a0a0 0,#a0a0a0 1px,transparent 1px,transparent 2px);"></div>
<div style="left:69px;top:483px;width:13px;height:13px;border:1px solid #8e8f8f;background:#f4f4f4;"></div>
<div style="left:71px;top:485px;width:9px;height:9px;background:linear-gradient(135deg,#d9dadb,#f6f6f6 80%);border:1px solid #c3c4c5;border-right-color:#e8e8e8;border-bottom-color:#e8e8e8;"></div>
<svg style="left:69px;top:483px;" width="13" height="13" viewBox="0 0 13 13"><path d="M3 6.4l2.3 3.2 4.6-6.6" fill="none" stroke="#4b5f97" stroke-width="1.9"/></svg>
<svg style="left:88.3px;top:484px;" width="10" height="12" viewBox="0 0 10 12"><path d="M4.7 .4L9 4v3.6L4.7 11.4.4 7.6V4z" fill="#a060c8"/><path d="M4.7 .4L9 4 4.7 7.2.4 4z" fill="#d8b0f0"/><path d="M4.7 7.2L9 4v3.6L4.7 11.4z" fill="#8040b0"/></svg>
<div class="t tr" style="left:103px;top:481.5px;max-width:114px;overflow:hidden;">Frequency</div>
<div style="left:59px;top:510px;width:10px;height:1px;background:repeating-linear-gradient(90deg,#a0a0a0 0,#a0a0a0 1px,transparent 1px,transparent 2px);"></div>
<div style="left:69px;top:503px;width:13px;height:13px;border:1px solid #8e8f8f;background:#f4f4f4;"></div>
<div style="left:71px;top:505px;width:9px;height:9px;background:linear-gradient(135deg,#d9dadb,#f6f6f6 80%);border:1px solid #c3c4c5;border-right-color:#e8e8e8;border-bottom-color:#e8e8e8;"></div>
<svg style="left:88.3px;top:504px;" width="10" height="12" viewBox="0 0 10 12"><path d="M4.7 .4L9 4v3.6L4.7 11.4.4 7.6V4z" fill="#a060c8"/><path d="M4.7 .4L9 4 4.7 7.2.4 4z" fill="#d8b0f0"/><path d="M4.7 7.2L9 4v3.6L4.7 11.4z" fill="#8040b0"/></svg>
<div class="t tr" style="left:103px;top:501.5px;max-width:114px;overflow:hidden;">Rise Time</div>
<div style="left:59px;top:530px;width:10px;height:1px;background:repeating-linear-gradient(90deg,#a0a0a0 0,#a0a0a0 1px,transparent 1px,transparent 2px);"></div>
<div style="left:69px;top:523px;width:13px;height:13px;border:1px solid #8e8f8f;background:#f4f4f4;"></div>
<div style="left:71px;top:525px;width:9px;height:9px;background:linear-gradient(135deg,#d9dadb,#f6f6f6 80%);border:1px solid #c3c4c5;border-right-color:#e8e8e8;border-bottom-color:#e8e8e8;"></div>
<svg style="left:88.3px;top:524px;" width="10" height="12" viewBox="0 0 10 12"><path d="M4.7 .4L9 4v3.6L4.7 11.4.4 7.6V4z" fill="#a060c8"/><path d="M4.7 .4L9 4 4.7 7.2.4 4z" fill="#d8b0f0"/><path d="M4.7 7.2L9 4v3.6L4.7 11.4z" fill="#8040b0"/></svg>
<div class="t tr" style="left:103px;top:521.5px;max-width:114px;overflow:hidden;">Fall Time</div>
<div style="left:59px;top:550px;width:10px;height:1px;background:repeating-linear-gradient(90deg,#a0a0a0 0,#a0a0a0 1px,transparent 1px,transparent 2px);"></div>
<div style="left:69px;top:543px;width:13px;height:13px;border:1px solid #8e8f8f;background:#f4f4f4;"></div>
<div style="left:71px;top:545px;width:9px;height:9px;background:linear-gradient(135deg,#d9dadb,#f6f6f6 80%);border:1px solid #c3c4c5;border-right-color:#e8e8e8;border-bottom-color:#e8e8e8;"></div>
<svg style="left:88.3px;top:544px;" width="10" height="12" viewBox="0 0 10 12"><path d="M4.7 .4L9 4v3.6L4.7 11.4.4 7.6V4z" fill="#a060c8"/><path d="M4.7 .4L9 4 4.7 7.2.4 4z" fill="#d8b0f0"/><path d="M4.7 7.2L9 4v3.6L4.7 11.4z" fill="#8040b0"/></svg>
<div class="t tr" style="left:103px;top:541.5px;max-width:114px;overflow:hidden;">+ Duty Cycle</div>
<div style="left:59px;top:570px;width:10px;height:1px;background:repeating-linear-gradient(90deg,#a0a0a0 0,#a0a0a0 1px,transparent 1px,transparent 2px);"></div>
<div style="left:69px;top:563px;width:13px;height:13px;border:1px solid #8e8f8f;background:#f4f4f4;"></div>
<div style="left:71px;top:565px;width:9px;height:9px;background:linear-gradient(135deg,#d9dadb,#f6f6f6 80%);border:1px solid #c3c4c5;border-right-color:#e8e8e8;border-bottom-color:#e8e8e8;"></div>
<svg style="left:88.3px;top:564px;" width="10" height="12" viewBox="0 0 10 12"><path d="M4.7 .4L9 4v3.6L4.7 11.4.4 7.6V4z" fill="#a060c8"/><path d="M4.7 .4L9 4 4.7 7.2.4 4z" fill="#d8b0f0"/><path d="M4.7 7.2L9 4v3.6L4.7 11.4z" fill="#8040b0"/></svg>
<div class="t tr" style="left:103px;top:561.5px;max-width:114px;overflow:hidden;">-- Duty Cycle</div>
<div style="left:59px;top:590px;width:10px;height:1px;background:repeating-linear-gradient(90deg,#a0a0a0 0,#a0a0a0 1px,transparent 1px,transparent 2px);"></div>
<div style="left:69px;top:583px;width:13px;height:13px;border:1px solid #8e8f8f;background:#f4f4f4;"></div>
<div style="left:71px;top:585px;width:9px;height:9px;background:linear-gradient(135deg,#d9dadb,#f6f6f6 80%);border:1px solid #c3c4c5;border-right-color:#e8e8e8;border-bottom-color:#e8e8e8;"></div>
<svg style="left:88.3px;top:584px;" width="10" height="12" viewBox="0 0 10 12"><path d="M4.7 .4L9 4v3.6L4.7 11.4.4 7.6V4z" fill="#a060c8"/><path d="M4.7 .4L9 4 4.7 7.2.4 4z" fill="#d8b0f0"/><path d="M4.7 7.2L9 4v3.6L4.7 11.4z" fill="#8040b0"/></svg>
<div class="t tr" style="left:103px;top:581.5px;max-width:114px;overflow:hidden;">+ Pulse Width</div>
<div style="left:59px;top:610px;width:10px;height:1px;background:repeating-linear-gradient(90deg,#a0a0a0 0,#a0a0a0 1px,transparent 1px,transparent 2px);"></div>
<div style="left:69px;top:603px;width:13px;height:13px;border:1px solid #8e8f8f;background:#f4f4f4;"></div>
<div style="left:71px;top:605px;width:9px;height:9px;background:linear-gradient(135deg,#d9dadb,#f6f6f6 80%);border:1px solid #c3c4c5;border-right-color:#e8e8e8;border-bottom-color:#e8e8e8;"></div>
<svg style="left:88.3px;top:604px;" width="10" height="12" viewBox="0 0 10 12"><path d="M4.7 .4L9 4v3.6L4.7 11.4.4 7.6V4z" fill="#a060c8"/><path d="M4.7 .4L9 4 4.7 7.2.4 4z" fill="#d8b0f0"/><path d="M4.7 7.2L9 4v3.6L4.7 11.4z" fill="#8040b0"/></svg>
<div class="t tr" style="left:103px;top:601.5px;max-width:114px;overflow:hidden;">-- Pulse Width</div>
<div style="left:8px;top:794.8px;width:210px;height:17px;background:linear-gradient(180deg,#e4e4e4,#f3f3f3 50%,#efefef);"></div>
<svg style="left:14.5px;top:799.3px;" width="4" height="7" viewBox="0 0 4 7"><path d="M4 0v7L0 3.5z" fill="#404040"/></svg>
<svg style="left:207px;top:799.3px;" width="4" height="7" viewBox="0 0 4 7"><path d="M0 0v7L4 3.5z" fill="#404040"/></svg>
<div style="left:27px;top:795.5999999999999px;width:168px;height:14.2px;border:1px solid #979797;border-radius:3px;background:linear-gradient(180deg,#f4f4f4 0,#e9e9e9 48%,#d6d6d6 52%,#cfcfcf 100%);"></div>
<div style="left:107.5px;top:799.3px;width:1px;height:7px;background:#5a5a5a;"></div>
<div style="left:110.1px;top:799.3px;width:1px;height:7px;background:#5a5a5a;"></div>
<div style="left:112.7px;top:799.3px;width:1px;height:7px;background:#5a5a5a;"></div>
<div style="left:222.5px;top:92px;width:577px;height:20.5px;background:linear-gradient(180deg,#f7f7f9,#ececee);"></div>
<svg style="left:236px;top:93px;" width="80" height="20" viewBox="0 0 80 20"><defs><linearGradient id="gt" x1="0" y1="0" x2="0" y2="1"><stop offset="0" stop-color="#fdf6bc"/><stop offset=".5" stop-color="#f8e98a"/><stop offset="1" stop-color="#f6ea94"/></linearGradient></defs>
<path d="M2 19.5 L19.5 3.2 Q21.5 1.5 24 1.5 L71 1.5 Q74 1.5 74 4.5 L74 19.5z" fill="url(#gt)" stroke="#cfc48a" stroke-width="1"/>
<path d="M3.5 19.5 L20.3 4 Q22 2.6 24 2.6 L71 2.6" fill="none" stroke="#fffbe0" stroke-width="1"/></svg>
<div class="t s" style="left:268.8px;top:94.6px;font-weight:bold;font-size:10.7px;letter-spacing:0;">Scope</div>
<svg style="left:228px;top:98px;" width="6" height="9" viewBox="0 0 6 9"><path d="M5 .7v7.6L.8 4.5z" fill="none" stroke="#000" stroke-width="1"/></svg>
<svg style="left:783px;top:98.5px;" width="6" height="9" viewBox="0 0 6 9"><path d="M.8 .7v7.6L5 4.5z" fill="none" stroke="#000" stroke-width="1"/></svg>
<div style="left:222.5px;top:112px;width:577px;height:488px;background:#f5e98e;border:1px solid #ddd6a8;box-shadow:inset 0 0 0 1px #fbf6cc;"></div>
<div style="left:793px;top:113px;width:5.5px;height:486px;background:linear-gradient(90deg,#fcfbd6 0,#f8f5a6 30%,#f6f29c 100%);"></div>
<div style="left:228px;top:117px;width:565px;height:476px;background:#3a3a3a;border:1px solid #6a6540;border-right-color:#4a4a40;border-bottom-color:#4a4a40;"></div>
<div style="left:231px;top:120px;width:50px;height:21px;background:#000;"></div>
<div class="t a" style="left:239.4px;top:123px;color:#9be53a;">Trig'D</div>
<div style="left:688px;top:120px;width:102px;height:22px;background:#000;"></div>
<svg style="left:691px;top:121px;" width="12" height="19" viewBox="0 0 12 19"><path d="M1.5 17.5h5v-15h4" fill="none" stroke="#f0f040" stroke-width="1.3"/><path d="M3 11.5l3.5-4.5 3.5 4.5z" fill="#f0f040"/></svg>
<div style="left:707px;top:123px;width:27px;height:15px;background:#f2f23a;"></div>
<div class="t a" style="left:709.5px;top:123px;color:#000;">CH1</div>
<div class="t a" style="left:741px;top:123px;color:#e9e95a;">-314mV</div>
<div style="left:229px;top:144px;width:564px;height:2px;background:#fff;"></div>
<div style="left:248px;top:162px;width:527px;height:407px;background:#000;border:3px solid #f1f1f1;box-shadow:0 0 0 .5px rgba(255,255,255,.25);"></div>
<svg style="left:0px;top:0px;" width="1012" height="839" viewBox="0 0 1012 839"><path d="M251 214h1M251 264h1M251 315h1M251 416h1M251 467h1M251 518h1M259 214h1M259 264h1M259 315h1M259 416h1M259 467h1M259 518h1M270 214h1M270 264h1M270 315h1M270 416h1M270 467h1M270 518h1M280 214h1M280 264h1M280 315h1M280 416h1M280 467h1M280 518h1M291 214h1M291 264h1M291 315h1M291 416h1M291 467h1M291 518h1M301 165h1M301 173h1M301 183h1M301 193h1M301 204h1M301 214h1M301 224h1M301 234h1M301 244h1M301 254h1M301 264h1M301 274h1M301 285h1M301 295h1M301 305h1M301 315h1M301 325h1M301 335h1M301 345h1M301 355h1M301 366h1M301 376h1M301 386h1M301 396h1M301 406h1M301 416h1M301 426h1M301 437h1M301 447h1M301 457h1M301 467h1M301 477h1M301 487h1M301 497h1M301 507h1M301 518h1M301 528h1M301 538h1M301 548h1M301 558h1M301 566h1M312 214h1M312 264h1M312 315h1M312 416h1M312 467h1M312 518h1M322 214h1M322 264h1M322 315h1M322 416h1M322 467h1M322 518h1M333 214h1M333 264h1M333 315h1M333 416h1M333 467h1M333 518h1M343 214h1M343 264h1M343 315h1M343 416h1M343 467h1M343 518h1M354 165h1M354 173h1M354 183h1M354 193h1M354 204h1M354 214h1M354 224h1M354 234h1M354 244h1M354 254h1M354 264h1M354 274h1M354 285h1M354 295h1M354 305h1M354 315h1M354 325h1M354 335h1M354 345h1M354 355h1M354 366h1M354 376h1M354 386h1M354 396h1M354 406h1M354 416h1M354 426h1M354 437h1M354 447h1M354 457h1M354 467h1M354 477h1M354 487h1M354 497h1M354 507h1M354 518h1M354 528h1M354 538h1M354 548h1M354 558h1M354 566h1M364 214h1M364 264h1M364 315h1M364 416h1M364 467h1M364 518h1M375 214h1M375 264h1M375 315h1M375 416h1M375 467h1M375 518h1M385 214h1M385 264h1M385 315h1M385 416h1M385 467h1M385 518h1M396 214h1M396 264h1M396 315h1M396 416h1M396 467h1M396 518h1M406 165h1M406 173h1M406 183h1M406 193h1M406 204h1M406 214h1M406 224h1M406 234h1M406 244h1M406 254h1M406 264h1M406 274h1M406 285h1M406 295h1M406 305h1M406 315h1M406 325h1M406 335h1M406 345h1M406 355h1M406 366h1M406 376h1M406 386h1M406 396h1M406 406h1M406 416h1M406 426h1M406 437h1M406 447h1M406 457h1M406 467h1M406 477h1M406 487h1M406 497h1M406 507h1M406 518h1M406 528h1M406 538h1M406 548h1M406 558h1M406 566h1M417 214h1M417 264h1M417 315h1M417 416h1M417 467h1M417 518h1M427 214h1M427 264h1M427 315h1M427 416h1M427 467h1M427 518h1M438 214h1M438 264h1M438 315h1M438 416h1M438 467h1M438 518h1M448 214h1M448 264h1M448 315h1M448 416h1M448 467h1M448 518h1M459 165h1M459 173h1M459 183h1M459 193h1M459 204h1M459 214h1M459 224h1M459 234h1M459 244h1M459 254h1M459 264h1M459 274h1M459 285h1M459 295h1M459 305h1M459 315h1M459 325h1M459 335h1M459 345h1M459 355h1M459 366h1M459 376h1M459 386h1M459 396h1M459 406h1M459 416h1M459 426h1M459 437h1M459 447h1M459 457h1M459 467h1M459 477h1M459 487h1M459 497h1M459 507h1M459 518h1M459 528h1M459 538h1M459 548h1M459 558h1M459 566h1M469 214h1M469 264h1M469 315h1M469 416h1M469 467h1M469 518h1M480 214h1M480 264h1M480 315h1M480 416h1M480 467h1M480 518h1M490 214h1M490 264h1M490 315h1M490 416h1M490 467h1M490 518h1M501 214h1M501 264h1M501 315h1M501 416h1M501 467h1M501 518h1M511 214h1M511 264h1M511 315h1M511 416h1M511 467h1M511 518h1M521 214h1M521 264h1M521 315h1M521 416h1M521 467h1M521 518h1M532 214h1M532 264h1M532 315h1M532 416h1M532 467h1M532 518h1M542 214h1M542 264h1M542 315h1M542 416h1M542 467h1M542 518h1M553 214h1M553 264h1M553 315h1M553 416h1M553 467h1M553 518h1M563 165h1M563 173h1M563 183h1M563 193h1M563 204h1M563 214h1M563 224h1M563 234h1M563 244h1M563 254h1M563 264h1M563 274h1M563 285h1M563 295h1M563 305h1M563 315h1M563 325h1M563 335h1M563 345h1M563 355h1M563 366h1M563 376h1M563 386h1M563 396h1M563 406h1M563 416h1M563 426h1M563 437h1M563 447h1M563 457h1M563 467h1M563 477h1M563 487h1M563 497h1M563 507h1M563 518h1M563 528h1M563 538h1M563 548h1M563 558h1M563 566h1M574 214h1M574 264h1M574 315h1M574 416h1M574 467h1M574 518h1M584 214h1M584 264h1M584 315h1M584 416h1M584 467h1M584 518h1M595 214h1M595 264h1M595 315h1M595 416h1M595 467h1M595 518h1M605 214h1M605 264h1M605 315h1M605 416h1M605 467h1M605 518h1M616 165h1M616 173h1M616 183h1M616 193h1M616 204h1M616 214h1M616 224h1M616 234h1M616 244h1M616 254h1M616 264h1M616 274h1M616 285h1M616 295h1M616 305h1M616 315h1M616 325h1M616 335h1M616 345h1M616 355h1M616 366h1M616 376h1M616 386h1M616 396h1M616 406h1M616 416h1M616 426h1M616 437h1M616 447h1M616 457h1M616 467h1M616 477h1M616 487h1M616 497h1M616 507h1M616 518h1M616 528h1M616 538h1M616 548h1M616 558h1M616 566h1M626 214h1M626 264h1M626 315h1M626 416h1M626 467h1M626 518h1M637 214h1M637 264h1M637 315h1M637 416h1M637 467h1M637 518h1M647 214h1M647 264h1M647 315h1M647 416h1M647 467h1M647 518h1M658 214h1M658 264h1M658 315h1M658 416h1M658 467h1M658 518h1M668 165h1M668 173h1M668 183h1M668 193h1M668 204h1M668 214h1M668 224h1M668 234h1M668 244h1M668 254h1M668 264h1M668 274h1M668 285h1M668 295h1M668 305h1M668 315h1M668 325h1M668 335h1M668 345h1M668 355h1M668 366h1M668 376h1M668 386h1M668 396h1M668 406h1M668 416h1M668 426h1M668 437h1M668 447h1M668 457h1M668 467h1M668 477h1M668 487h1M668 497h1M668 507h1M668 518h1M668 528h1M668 538h1M668 548h1M668 558h1M668 566h1M679 214h1M679 264h1M679 315h1M679 416h1M679 467h1M679 518h1M689 214h1M689 264h1M689 315h1M689 416h1M689 467h1M689 518h1M700 214h1M700 264h1M700 315h1M700 416h1M700 467h1M700 518h1M710 214h1M710 264h1M710 315h1M710 416h1M710 467h1M710 518h1M721 165h1M721 173h1M721 183h1M721 193h1M721 204h1M721 214h1M721 224h1M721 234h1M721 244h1M721 254h1M721 264h1M721 274h1M721 285h1M721 295h1M721 305h1M721 315h1M721 325h1M721 335h1M721 345h1M721 355h1M721 366h1M721 376h1M721 386h1M721 396h1M721 406h1M721 416h1M721 426h1M721 437h1M721 447h1M721 457h1M721 467h1M721 477h1M721 487h1M721 497h1M721 507h1M721 518h1M721 528h1M721 538h1M721 548h1M721 558h1M721 566h1M731 214h1M731 264h1M731 315h1M731 416h1M731 467h1M731 518h1M742 214h1M742 264h1M742 315h1M742 416h1M742 467h1M742 518h1M752 214h1M752 264h1M752 315h1M752 416h1M752 467h1M752 518h1M763 214h1M763 264h1M763 315h1M763 416h1M763 467h1M763 518h1M771 214h1M771 264h1M771 315h1M771 416h1M771 467h1M771 518h1" stroke="#c8c8c8" stroke-width="1" fill="none" transform="translate(0,.5)"/><path d="M251 366.5H772M511.5 165V566M259.5 364v5M270.5 364v5M280.5 364v5M291.5 364v5M301.5 364v5M312.5 364v5M322.5 364v5M333.5 364v5M343.5 364v5M354.5 364v5M364.5 364v5M375.5 364v5M385.5 364v5M396.5 364v5M406.5 364v5M417.5 364v5M427.5 364v5M438.5 364v5M448.5 364v5M459.5 364v5M469.5 364v5M480.5 364v5M490.5 364v5M501.5 364v5M511.5 364v5M521.5 364v5M532.5 364v5M542.5 364v5M553.5 364v5M563.5 364v5M574.5 364v5M584.5 364v5M595.5 364v5M605.5 364v5M616.5 364v5M626.5 364v5M637.5 364v5M647.5 364v5M658.5 364v5M668.5 364v5M679.5 364v5M689.5 364v5M700.5 364v5M710.5 364v5M721.5 364v5M731.5 364v5M742.5 364v5M752.5 364v5M763.5 364v5M509 173.5h5M509 183.5h5M509 193.5h5M509 204.5h5M509 214.5h5M509 224.5h5M509 234.5h5M509 244.5h5M509 254.5h5M509 264.5h5M509 274.5h5M509 285.5h5M509 295.5h5M509 305.5h5M509 315.5h5M509 325.5h5M509 335.5h5M509 345.5h5M509 355.5h5M509 366.5h5M509 376.5h5M509 386.5h5M509 396.5h5M509 406.5h5M509 416.5h5M509 426.5h5M509 437.5h5M509 447.5h5M509 457.5h5M509 467.5h5M509 477.5h5M509 487.5h5M509 497.5h5M509 507.5h5M509 518.5h5M509 528.5h5M509 538.5h5M509 548.5h5M509 558.5h5" stroke="#dedede" stroke-width="1" fill="none"/><path d="M251 271.5h1M252.5 272V274M252 273.5h1M253.5 274V277M253 276.5h1M254.5 277V280M254 279.5h1M255.5 280V284M255 283.5h1M256.5 284V287M256 286.5h1M257.5 287V289M257 288.5h1M258.5 289V292M258 291.5h1M259.5 292V295M259 294.5h1M260.5 295V297M260 296.5h1M261.5 297V300M261 299.5h1M262.5 300V301M262 300.5h1M263.5 301V303M263 302.5h1M264.5 303V305M264 304.5h1M265.5 305V308M265 307.5h1M266.5 308V310M266 309.5h1M267.5 310V311M267 310.5h1h1M269.5 311V313M269 312.5h1M270.5 313V314M270 313.5h1h1M272.5 314V316M272 315.5h1h1h1h1h1h1M278.5 313V315M278 313.5h1h1M280.5 312V313M280 312.5h1h1M282.5 310V312M282 310.5h1M283.5 309V310M283 309.5h1M284.5 307V309M284 307.5h1M285.5 305V307M285 305.5h1M286.5 304V305M286 304.5h1M287.5 302V304M287 302.5h1M288.5 300V302M288 300.5h1M289.5 297V300M289 297.5h1M290.5 296V297M290 296.5h1M291.5 292V296M291 292.5h1M292.5 291V292M292 291.5h1M293.5 288V291M293 288.5h1M294.5 284V288M294 284.5h1M295.5 281V284M295 281.5h1M296.5 279V281M296 279.5h1M297.5 276V279M297 276.5h1M298.5 273V276M298 273.5h1M299.5 270V273M299 270.5h1M300.5 266V270M300 266.5h1M301.5 263V266M301 263.5h1M302.5 260V263M302 260.5h1M303.5 257V260M303 257.5h1M304.5 253V257M304 253.5h1M305.5 252V253M305 252.5h1M306.5 249V252M306 249.5h1M307.5 245V249M307 245.5h1M308.5 242V245M308 242.5h1M309.5 239V242M309 239.5h1M310.5 237V239M310 237.5h1M311.5 234V237M311 234.5h1M312.5 232V234M312 232.5h1M313.5 229V232M313 229.5h1M314.5 228V229M314 228.5h1M315.5 224V228M315 224.5h1M316.5 223V224M316 223.5h1M317.5 221V223M317 221.5h1M318.5 219V221M318 219.5h1M319.5 218V219M319 218.5h1M320.5 216V218M320 216.5h1M321.5 215V216M321 215.5h1h1M323.5 213V215M323 213.5h1h1M325.5 211V213M325 211.5h1h1h1h1h1h1M331.5 212V214M331 213.5h1h1M333.5 214V216M333 215.5h1M334.5 216V217M334 216.5h1h1M336.5 217V219M336 218.5h1M337.5 219V220M337 219.5h1M338.5 220V222M338 221.5h1M339.5 222V225M339 224.5h1M340.5 225V227M340 226.5h1M341.5 227V229M341 228.5h1M342.5 229V232M342 231.5h1M343.5 232V233M343 232.5h1M344.5 233V237M344 236.5h1M345.5 237V238M345 237.5h1M346.5 238V242M346 241.5h1M347.5 242V245M347 244.5h1M348.5 245V248M348 247.5h1M349.5 248V250M349 249.5h1M350.5 250V253M350 252.5h1M351.5 253V256M351 255.5h1M352.5 256V259M352 258.5h1M353.5 259V263M353 262.5h1M354.5 263V266M354 265.5h1M355.5 266V269M355 268.5h1M356.5 269V272M356 271.5h1M357.5 272V276M357 275.5h1M358.5 276V277M358 276.5h1M359.5 277V280M359 279.5h1M360.5 280V284M360 283.5h1M361.5 284V287M361 286.5h1M362.5 287V290M362 289.5h1M363.5 290V292M363 291.5h1M364.5 292V295M364 294.5h1M365.5 295V297M365 296.5h1M366.5 297V300M366 299.5h1M367.5 300V301M367 300.5h1M368.5 301V303M368 302.5h1M369.5 303V306M369 305.5h1M370.5 306V308M370 307.5h1M371.5 308V310M371 309.5h1M372.5 310V311M372 310.5h1h1M374.5 311V313M374 312.5h1M375.5 313V314M375 313.5h1h1M377.5 314V316M377 315.5h1h1h1h1h1h1M383.5 313V315M383 313.5h1h1M385.5 312V313M385 312.5h1h1M387.5 310V312M387 310.5h1M388.5 309V310M388 309.5h1M389.5 307V309M389 307.5h1M390.5 305V307M390 305.5h1M391.5 304V305M391 304.5h1M392.5 302V304M392 302.5h1M393.5 299V302M393 299.5h1M394.5 297V299M394 297.5h1M395.5 296V297M395 296.5h1M396.5 292V296M396 292.5h1M397.5 289V292M397 289.5h1M398.5 288V289M398 288.5h1M399.5 284V288M399 284.5h1M400.5 281V284M400 281.5h1M401.5 278V281M401 278.5h1M402.5 276V278M402 276.5h1M403.5 273V276M403 273.5h1M404.5 270V273M404 270.5h1M405.5 266V270M405 266.5h1M406.5 263V266M406 263.5h1M407.5 260V263M407 260.5h1M408.5 257V260M408 257.5h1M409.5 253V257M409 253.5h1M410.5 250V253M410 250.5h1M411.5 249V250M411 249.5h1M412.5 245V249M412 245.5h1M413.5 242V245M413 242.5h1M414.5 239V242M414 239.5h1M415.5 237V239M415 237.5h1M416.5 234V237M416 234.5h1M417.5 231V234M417 231.5h1M418.5 229V231M418 229.5h1M419.5 228V229M419 228.5h1M420.5 224V228M420 224.5h1M421.5 223V224M421 223.5h1M422.5 221V223M422 221.5h1M423.5 219V221M423 219.5h1M424.5 218V219M424 218.5h1M425.5 216V218M425 216.5h1M426.5 215V216M426 215.5h1h1M428.5 213V215M428 213.5h1h1M430.5 211V213M430 211.5h1h1h1h1h1h1M436.5 212V214M436 213.5h1h1M438.5 214V216M438 215.5h1M439.5 216V217M439 216.5h1h1M441.5 217V219M441 218.5h1M442.5 219V220M442 219.5h1M443.5 220V222M443 221.5h1M444.5 222V225M444 224.5h1M445.5 225V227M445 226.5h1M446.5 227V229M446 228.5h1M447.5 229V232M447 231.5h1M448.5 232V233M448 232.5h1M449.5 233V237M449 236.5h1M450.5 237V238M450 237.5h1M451.5 238V242M451 241.5h1M452.5 242V245M452 244.5h1M453.5 245V248M453 247.5h1M454.5 248V251M454 250.5h1M455.5 251V253M455 252.5h1M456.5 253V256M456 255.5h1M457.5 256V259M457 258.5h1M458.5 259V263M458 262.5h1M459.5 263V266M459 265.5h1M460.5 266V269M460 268.5h1M461.5 269V272M461 271.5h1M462.5 272V276M462 275.5h1M463.5 276V279M463 278.5h1M464.5 279V280M464 279.5h1M465.5 280V284M465 283.5h1M466.5 284V287M466 286.5h1M467.5 287V290M467 289.5h1M468.5 290V292M468 291.5h1M469.5 292V295M469 294.5h1M470.5 295V297M470 296.5h1M471.5 297V300M471 299.5h1M472.5 300V301M472 300.5h1M473.5 301V303M473 302.5h1M474.5 303V306M474 305.5h1M475.5 306V308M475 307.5h1M476.5 308V310M476 309.5h1M477.5 310V311M477 310.5h1h1M479.5 311V313M479 312.5h1M480.5 313V314M480 313.5h1h1M482.5 314V316M482 315.5h1h1h1h1h1h1M488.5 313V315M488 313.5h1h1M490.5 312V313M490 312.5h1h1M492.5 310V312M492 310.5h1M493.5 309V310M493 309.5h1M494.5 307V309M494 307.5h1M495.5 305V307M495 305.5h1M496.5 304V305M496 304.5h1M497.5 302V304M497 302.5h1M498.5 299V302M498 299.5h1M499.5 297V299M499 297.5h1M500.5 296V297M500 296.5h1M501.5 292V296M501 292.5h1M502.5 289V292M502 289.5h1M503.5 288V289M503 288.5h1M504.5 284V288M504 284.5h1M505.5 281V284M505 281.5h1M506.5 278V281M506 278.5h1M507.5 276V278M507 276.5h1M508.5 273V276M508 273.5h1M509.5 270V273M509 270.5h1M510.5 266V270M510 266.5h1M511.5 263V266M511 263.5h1M512.5 260V263M512 260.5h1M513.5 257V260M513 257.5h1M514.5 253V257M514 253.5h1M515.5 250V253M515 250.5h1M516.5 249V250M516 249.5h1M517.5 245V249M517 245.5h1M518.5 242V245M518 242.5h1M519.5 239V242M519 239.5h1M520.5 237V239M520 237.5h1M521.5 234V237M521 234.5h1M522.5 231V234M522 231.5h1M523.5 229V231M523 229.5h1M524.5 228V229M524 228.5h1M525.5 224V228M525 224.5h1M526.5 223V224M526 223.5h1M527.5 221V223M527 221.5h1M528.5 219V221M528 219.5h1M529.5 218V219M529 218.5h1M530.5 216V218M530 216.5h1M531.5 215V216M531 215.5h1h1M533.5 213V215M533 213.5h1h1M535.5 211V213M535 211.5h1h1h1h1h1h1M541.5 212V214M541 213.5h1h1M543.5 214V216M543 215.5h1M544.5 216V217M544 216.5h1h1M546.5 217V219M546 218.5h1M547.5 219V220M547 219.5h1M548.5 220V222M548 221.5h1M549.5 222V225M549 224.5h1M550.5 225V227M550 226.5h1M551.5 227V229M551 228.5h1M552.5 229V232M552 231.5h1M553.5 232V233M553 232.5h1M554.5 233V237M554 236.5h1M555.5 237V240M555 239.5h1M556.5 240V242M556 241.5h1M557.5 242V245M557 244.5h1M558.5 245V248M558 247.5h1M559.5 248V251M559 250.5h1M560.5 251V253M560 252.5h1M561.5 253V256M561 255.5h1M562.5 256V259M562 258.5h1M563.5 259V263M563 262.5h1M564.5 263V266M564 265.5h1M565.5 266V269M565 268.5h1M566.5 269V272M566 271.5h1M567.5 272V276M567 275.5h1M568.5 276V279M568 278.5h1M569.5 279V280M569 279.5h1M570.5 280V284M570 283.5h1M571.5 284V287M571 286.5h1M572.5 287V290M572 289.5h1M573.5 290V292M573 291.5h1M574.5 292V295M574 294.5h1M575.5 295V297M575 296.5h1M576.5 297V300M576 299.5h1M577.5 300V301M577 300.5h1M578.5 301V303M578 302.5h1M579.5 303V306M579 305.5h1M580.5 306V308M580 307.5h1M581.5 308V310M581 309.5h1M582.5 310V311M582 310.5h1h1M584.5 311V313M584 312.5h1M585.5 313V314M585 313.5h1h1M587.5 314V316M587 315.5h1h1h1h1h1h1M593.5 313V315M593 313.5h1h1M595.5 312V313M595 312.5h1h1M597.5 310V312M597 310.5h1M598.5 309V310M598 309.5h1M599.5 307V309M599 307.5h1M600.5 305V307M600 305.5h1M601.5 304V305M601 304.5h1M602.5 302V304M602 302.5h1M603.5 299V302M603 299.5h1M604.5 297V299M604 297.5h1M605.5 294V297M605 294.5h1M606.5 292V294M606 292.5h1M607.5 289V292M607 289.5h1M608.5 288V289M608 288.5h1M609.5 284V288M609 284.5h1M610.5 281V284M610 281.5h1M611.5 278V281M611 278.5h1M612.5 275V278M612 275.5h1M613.5 273V275M613 273.5h1M614.5 270V273M614 270.5h1M615.5 266V270M615 266.5h1M616.5 263V266M616 263.5h1M617.5 260V263M617 260.5h1M618.5 257V260M618 257.5h1M619.5 253V257M619 253.5h1M620.5 250V253M620 250.5h1M621.5 247V250M621 247.5h1M622.5 245V247M622 245.5h1M623.5 242V245M623 242.5h1M624.5 239V242M624 239.5h1M625.5 236V239M625 236.5h1M626.5 234V236M626 234.5h1M627.5 231V234M627 231.5h1M628.5 229V231M628 229.5h1M629.5 226V229M629 226.5h1M630.5 224V226M630 224.5h1M631.5 223V224M631 223.5h1M632.5 221V223M632 221.5h1M633.5 219V221M633 219.5h1M634.5 218V219M634 218.5h1M635.5 216V218M635 216.5h1M636.5 215V216M636 215.5h1h1M638.5 213V215M638 213.5h1h1M640.5 211V213M640 211.5h1h1h1h1h1h1M646.5 212V214M646 213.5h1h1M648.5 214V216M648 215.5h1M649.5 216V217M649 216.5h1h1M651.5 217V219M651 218.5h1M652.5 219V220M652 219.5h1M653.5 220V224M653 223.5h1M654.5 224V225M654 224.5h1M655.5 225V227M655 226.5h1M656.5 227V229M656 228.5h1M657.5 229V232M657 231.5h1M658.5 232V233M658 232.5h1M659.5 233V237M659 236.5h1M660.5 237V240M660 239.5h1M661.5 240V242M661 241.5h1M662.5 242V245M662 244.5h1M663.5 245V248M663 247.5h1M664.5 248V251M664 250.5h1M665.5 251V254M665 253.5h1M666.5 254V256M666 255.5h1M667.5 256V259M667 258.5h1M668.5 259V263M668 262.5h1M669.5 263V266M669 265.5h1M670.5 266V269M670 268.5h1M671.5 269V272M671 271.5h1M672.5 272V276M672 275.5h1M673.5 276V279M673 278.5h1M674.5 279V282M674 281.5h1M675.5 282V284M675 283.5h1M676.5 284V287M676 286.5h1M677.5 287V290M677 289.5h1M678.5 290V292M678 291.5h1M679.5 292V295M679 294.5h1M680.5 295V297M680 296.5h1M681.5 297V300M681 299.5h1M682.5 300V301M682 300.5h1M683.5 301V305M683 304.5h1M684.5 305V306M684 305.5h1M685.5 306V308M685 307.5h1M686.5 308V310M686 309.5h1M687.5 310V311M687 310.5h1h1M689.5 311V313M689 312.5h1M690.5 313V314M690 313.5h1h1M692.5 314V316M692 315.5h1h1h1h1h1h1M698.5 313V315M698 313.5h1h1M700.5 312V313M700 312.5h1h1M702.5 310V312M702 310.5h1M703.5 309V310M703 309.5h1M704.5 307V309M704 307.5h1M705.5 305V307M705 305.5h1M706.5 304V305M706 304.5h1M707.5 302V304M707 302.5h1M708.5 299V302M708 299.5h1M709.5 297V299M709 297.5h1M710.5 294V297M710 294.5h1M711.5 292V294M711 292.5h1M712.5 289V292M712 289.5h1M713.5 288V289M713 288.5h1M714.5 284V288M714 284.5h1M715.5 281V284M715 281.5h1M716.5 278V281M716 278.5h1M717.5 275V278M717 275.5h1M718.5 271V275M718 271.5h1M719.5 270V271M719 270.5h1M720.5 266V270M720 266.5h1M721.5 263V266M721 263.5h1M722.5 260V263M722 260.5h1M723.5 257V260M723 257.5h1M724.5 253V257M724 253.5h1M725.5 250V253M725 250.5h1M726.5 247V250M726 247.5h1M727.5 245V247M727 245.5h1M728.5 242V245M728 242.5h1M729.5 239V242M729 239.5h1M730.5 236V239M730 236.5h1M731.5 234V236M731 234.5h1M732.5 231V234M732 231.5h1M733.5 229V231M733 229.5h1M734.5 226V229M734 226.5h1M735.5 224V226M735 224.5h1M736.5 223V224M736 223.5h1M737.5 221V223M737 221.5h1M738.5 219V221M738 219.5h1M739.5 218V219M739 218.5h1M740.5 216V218M740 216.5h1M741.5 215V216M741 215.5h1h1M743.5 213V215M743 213.5h1h1M745.5 211V213M745 211.5h1h1h1h1h1M750.5 212V214M750 213.5h1h1h1M753.5 214V216M753 215.5h1M754.5 216V217M754 216.5h1M755.5 217V219M755 218.5h1h1M757.5 219V220M757 219.5h1M758.5 220V224M758 223.5h1M759.5 224V225M759 224.5h1M760.5 225V227M760 226.5h1M761.5 227V229M761 228.5h1M762.5 229V232M762 231.5h1M763.5 232V233M763 232.5h1M764.5 233V237M764 236.5h1M765.5 237V240M765 239.5h1M766.5 240V242M766 241.5h1M767.5 242V245M767 244.5h1M768.5 245V248M768 247.5h1M769.5 248V251M769 250.5h1M770.5 251V254M770 253.5h1M771.5 254V258M771 257.5h1" stroke="#efef5e" stroke-width="1" fill="none" shape-rendering="crispEdges"/><path d="M251 271.5h1M252.5 272V274M252 273.5h1M253.5 274V277M253 276.5h1M254.5 277V280M254 279.5h1M255.5 280V284M255 283.5h1M256.5 284V287M256 286.5h1M257.5 287V289M257 288.5h1M258.5 289V292M258 291.5h1M259.5 292V295M259 294.5h1M260.5 295V297M260 296.5h1M261.5 297V300M261 299.5h1M262.5 300V301M262 300.5h1M263.5 301V303M263 302.5h1M264.5 303V305M264 304.5h1M265.5 305V308M265 307.5h1M266.5 308V310M266 309.5h1M267.5 310V311M267 310.5h1h1M269.5 311V313M269 312.5h1M270.5 313V314M270 313.5h1h1M272.5 314V316M272 315.5h1h1h1h1h1h1M278.5 313V315M278 313.5h1h1M280.5 312V313M280 312.5h1h1M282.5 310V312M282 310.5h1M283.5 309V310M283 309.5h1M284.5 307V309M284 307.5h1M285.5 305V307M285 305.5h1M286.5 304V305M286 304.5h1M287.5 302V304M287 302.5h1M288.5 300V302M288 300.5h1M289.5 297V300M289 297.5h1M290.5 296V297M290 296.5h1M291.5 292V296M291 292.5h1M292.5 291V292M292 291.5h1M293.5 288V291M293 288.5h1M294.5 284V288M294 284.5h1M295.5 281V284M295 281.5h1M296.5 279V281M296 279.5h1M297.5 276V279M297 276.5h1M298.5 273V276M298 273.5h1M299.5 270V273M299 270.5h1M300.5 266V270M300 266.5h1M301.5 263V266M301 263.5h1M302.5 260V263M302 260.5h1M303.5 257V260M303 257.5h1M304.5 253V257M304 253.5h1M305.5 252V253M305 252.5h1M306.5 249V252M306 249.5h1M307.5 245V249M307 245.5h1M308.5 242V245M308 242.5h1M309.5 239V242M309 239.5h1M310.5 237V239M310 237.5h1M311.5 234V237M311 234.5h1M312.5 232V234M312 232.5h1M313.5 229V232M313 229.5h1M314.5 228V229M314 228.5h1M315.5 224V228M315 224.5h1M316.5 223V224M316 223.5h1M317.5 221V223M317 221.5h1M318.5 219V221M318 219.5h1M319.5 218V219M319 218.5h1M320.5 216V218M320 216.5h1M321.5 215V216M321 215.5h1h1M323.5 213V215M323 213.5h1h1M325.5 211V213M325 211.5h1h1h1h1h1h1M331.5 212V214M331 213.5h1h1M333.5 214V216M333 215.5h1M334.5 216V217M334 216.5h1h1M336.5 217V219M336 218.5h1M337.5 219V220M337 219.5h1M338.5 220V222M338 221.5h1M339.5 222V225M339 224.5h1M340.5 225V227M340 226.5h1M341.5 227V229M341 228.5h1M342.5 229V232M342 231.5h1M343.5 232V233M343 232.5h1M344.5 233V237M344 236.5h1M345.5 237V238M345 237.5h1M346.5 238V242M346 241.5h1M347.5 242V245M347 244.5h1M348.5 245V248M348 247.5h1M349.5 248V250M349 249.5h1M350.5 250V253M350 252.5h1M351.5 253V256M351 255.5h1M352.5 256V259M352 258.5h1M353.5 259V263M353 262.5h1M354.5 263V266M354 265.5h1M355.5 266V269M355 268.5h1M356.5 269V272M356 271.5h1M357.5 272V276M357 275.5h1M358.5 276V277M358 276.5h1M359.5 277V280M359 279.5h1M360.5 280V284M360 283.5h1M361.5 284V287M361 286.5h1M362.5 287V290M362 289.5h1M363.5 290V292M363 291.5h1M364.5 292V295M364 294.5h1M365.5 295V297M365 296.5h1M366.5 297V300M366 299.5h1M367.5 300V301M367 300.5h1M368.5 301V303M368 302.5h1M369.5 303V306M369 305.5h1M370.5 306V308M370 307.5h1M371.5 308V310M371 309.5h1M372.5 310V311M372 310.5h1h1M374.5 311V313M374 312.5h1M375.5 313V314M375 313.5h1h1M377.5 314V316M377 315.5h1h1h1h1h1h1M383.5 313V315M383 313.5h1h1M385.5 312V313M385 312.5h1h1M387.5 310V312M387 310.5h1M388.5 309V310M388 309.5h1M389.5 307V309M389 307.5h1M390.5 305V307M390 305.5h1M391.5 304V305M391 304.5h1M392.5 302V304M392 302.5h1M393.5 299V302M393 299.5h1M394.5 297V299M394 297.5h1M395.5 296V297M395 296.5h1M396.5 292V296M396 292.5h1M397.5 289V292M397 289.5h1M398.5 288V289M398 288.5h1M399.5 284V288M399 284.5h1M400.5 281V284M400 281.5h1M401.5 278V281M401 278.5h1M402.5 276V278M402 276.5h1M403.5 273V276M403 273.5h1M404.5 270V273M404 270.5h1M405.5 266V270M405 266.5h1M406.5 263V266M406 263.5h1M407.5 260V263M407 260.5h1M408.5 257V260M408 257.5h1M409.5 253V257M409 253.5h1M410.5 250V253M410 250.5h1M411.5 249V250M411 249.5h1M412.5 245V249M412 245.5h1M413.5 242V245M413 242.5h1M414.5 239V242M414 239.5h1M415.5 237V239M415 237.5h1M416.5 234V237M416 234.5h1M417.5 231V234M417 231.5h1M418.5 229V231M418 229.5h1M419.5 228V229M419 228.5h1M420.5 224V228M420 224.5h1M421.5 223V224M421 223.5h1M422.5 221V223M422 221.5h1M423.5 219V221M423 219.5h1M424.5 218V219M424 218.5h1M425.5 216V218M425 216.5h1M426.5 215V216M426 215.5h1h1M428.5 213V215M428 213.5h1h1M430.5 211V213M430 211.5h1h1h1h1h1h1M436.5 212V214M436 213.5h1h1M438.5 214V216M438 215.5h1M439.5 216V217M439 216.5h1h1M441.5 217V219M441 218.5h1M442.5 219V220M442 219.5h1M443.5 220V222M443 221.5h1M444.5 222V225M444 224.5h1M445.5 225V227M445 226.5h1M446.5 227V229M446 228.5h1M447.5 229V232M447 231.5h1M448.5 232V233M448 232.5h1M449.5 233V237M449 236.5h1M450.5 237V238M450 237.5h1M451.5 238V242M451 241.5h1M452.5 242V245M452 244.5h1M453.5 245V248M453 247.5h1M454.5 248V251M454 250.5h1M455.5 251V253M455 252.5h1M456.5 253V256M456 255.5h1M457.5 256V259M457 258.5h1M458.5 259V263M458 262.5h1M459.5 263V266M459 265.5h1M460.5 266V269M460 268.5h1M461.5 269V272M461 271.5h1M462.5 272V276M462 275.5h1M463.5 276V279M463 278.5h1M464.5 279V280M464 279.5h1M465.5 280V284M465 283.5h1M466.5 284V287M466 286.5h1M467.5 287V290M467 289.5h1M468.5 290V292M468 291.5h1M469.5 292V295M469 294.5h1M470.5 295V297M470 296.5h1M471.5 297V300M471 299.5h1M472.5 300V301M472 300.5h1M473.5 301V303M473 302.5h1M474.5 303V306M474 305.5h1M475.5 306V308M475 307.5h1M476.5 308V310M476 309.5h1M477.5 310V311M477 310.5h1h1M479.5 311V313M479 312.5h1M480.5 313V314M480 313.5h1h1M482.5 314V316M482 315.5h1h1h1h1h1h1M488.5 313V315M488 313.5h1h1M490.5 312V313M490 312.5h1h1M492.5 310V312M492 310.5h1M493.5 309V310M493 309.5h1M494.5 307V309M494 307.5h1M495.5 305V307M495 305.5h1M496.5 304V305M496 304.5h1M497.5 302V304M497 302.5h1M498.5 299V302M498 299.5h1M499.5 297V299M499 297.5h1M500.5 296V297M500 296.5h1M501.5 292V296M501 292.5h1M502.5 289V292M502 289.5h1M503.5 288V289M503 288.5h1M504.5 284V288M504 284.5h1M505.5 281V284M505 281.5h1M506.5 278V281M506 278.5h1M507.5 276V278M507 276.5h1M508.5 273V276M508 273.5h1M509.5 270V273M509 270.5h1M510.5 266V270M510 266.5h1M511.5 263V266M511 263.5h1M512.5 260V263M512 260.5h1M513.5 257V260M513 257.5h1M514.5 253V257M514 253.5h1M515.5 250V253M515 250.5h1M516.5 249V250M516 249.5h1M517.5 245V249M517 245.5h1M518.5 242V245M518 242.5h1M519.5 239V242M519 239.5h1M520.5 237V239M520 237.5h1M521.5 234V237M521 234.5h1M522.5 231V234M522 231.5h1M523.5 229V231M523 229.5h1M524.5 228V229M524 228.5h1M525.5 224V228M525 224.5h1M526.5 223V224M526 223.5h1M527.5 221V223M527 221.5h1M528.5 219V221M528 219.5h1M529.5 218V219M529 218.5h1M530.5 216V218M530 216.5h1M531.5 215V216M531 215.5h1h1M533.5 213V215M533 213.5h1h1M535.5 211V213M535 211.5h1h1h1h1h1h1M541.5 212V214M541 213.5h1h1M543.5 214V216M543 215.5h1M544.5 216V217M544 216.5h1h1M546.5 217V219M546 218.5h1M547.5 219V220M547 219.5h1M548.5 220V222M548 221.5h1M549.5 222V225M549 224.5h1M550.5 225V227M550 226.5h1M551.5 227V229M551 228.5h1M552.5 229V232M552 231.5h1M553.5 232V233M553 232.5h1M554.5 233V237M554 236.5h1M555.5 237V240M555 239.5h1M556.5 240V242M556 241.5h1M557.5 242V245M557 244.5h1M558.5 245V248M558 247.5h1M559.5 248V251M559 250.5h1M560.5 251V253M560 252.5h1M561.5 253V256M561 255.5h1M562.5 256V259M562 258.5h1M563.5 259V263M563 262.5h1M564.5 263V266M564 265.5h1M565.5 266V269M565 268.5h1M566.5 269V272M566 271.5h1M567.5 272V276M567 275.5h1M568.5 276V279M568 278.5h1M569.5 279V280M569 279.5h1M570.5 280V284M570 283.5h1M571.5 284V287M571 286.5h1M572.5 287V290M572 289.5h1M573.5 290V292M573 291.5h1M574.5 292V295M574 294.5h1M575.5 295V297M575 296.5h1M576.5 297V300M576 299.5h1M577.5 300V301M577 300.5h1M578.5 301V303M578 302.5h1M579.5 303V306M579 305.5h1M580.5 306V308M580 307.5h1M581.5 308V310M581 309.5h1M582.5 310V311M582 310.5h1h1M584.5 311V313M584 312.5h1M585.5 313V314M585 313.5h1h1M587.5 314V316M587 315.5h1h1h1h1h1h1M593.5 313V315M593 313.5h1h1M595.5 312V313M595 312.5h1h1M597.5 310V312M597 310.5h1M598.5 309V310M598 309.5h1M599.5 307V309M599 307.5h1M600.5 305V307M600 305.5h1M601.5 304V305M601 304.5h1M602.5 302V304M602 302.5h1M603.5 299V302M603 299.5h1M604.5 297V299M604 297.5h1M605.5 294V297M605 294.5h1M606.5 292V294M606 292.5h1M607.5 289V292M607 289.5h1M608.5 288V289M608 288.5h1M609.5 284V288M609 284.5h1M610.5 281V284M610 281.5h1M611.5 278V281M611 278.5h1M612.5 275V278M612 275.5h1M613.5 273V275M613 273.5h1M614.5 270V273M614 270.5h1M615.5 266V270M615 266.5h1M616.5 263V266M616 263.5h1M617.5 260V263M617 260.5h1M618.5 257V260M618 257.5h1M619.5 253V257M619 253.5h1M620.5 250V253M620 250.5h1M621.5 247V250M621 247.5h1M622.5 245V247M622 245.5h1M623.5 242V245M623 242.5h1M624.5 239V242M624 239.5h1M625.5 236V239M625 236.5h1M626.5 234V236M626 234.5h1M627.5 231V234M627 231.5h1M628.5 229V231M628 229.5h1M629.5 226V229M629 226.5h1M630.5 224V226M630 224.5h1M631.5 223V224M631 223.5h1M632.5 221V223M632 221.5h1M633.5 219V221M633 219.5h1M634.5 218V219M634 218.5h1M635.5 216V218M635 216.5h1M636.5 215V216M636 215.5h1h1M638.5 213V215M638 213.5h1h1M640.5 211V213M640 211.5h1h1h1h1h1h1M646.5 212V214M646 213.5h1h1M648.5 214V216M648 215.5h1M649.5 216V217M649 216.5h1h1M651.5 217V219M651 218.5h1M652.5 219V220M652 219.5h1M653.5 220V224M653 223.5h1M654.5 224V225M654 224.5h1M655.5 225V227M655 226.5h1M656.5 227V229M656 228.5h1M657.5 229V232M657 231.5h1M658.5 232V233M658 232.5h1M659.5 233V237M659 236.5h1M660.5 237V240M660 239.5h1M661.5 240V242M661 241.5h1M662.5 242V245M662 244.5h1M663.5 245V248M663 247.5h1M664.5 248V251M664 250.5h1M665.5 251V254M665 253.5h1M666.5 254V256M666 255.5h1M667.5 256V259M667 258.5h1M668.5 259V263M668 262.5h1M669.5 263V266M669 265.5h1M670.5 266V269M670 268.5h1M671.5 269V272M671 271.5h1M672.5 272V276M672 275.5h1M673.5 276V279M673 278.5h1M674.5 279V282M674 281.5h1M675.5 282V284M675 283.5h1M676.5 284V287M676 286.5h1M677.5 287V290M677 289.5h1M678.5 290V292M678 291.5h1M679.5 292V295M679 294.5h1M680.5 295V297M680 296.5h1M681.5 297V300M681 299.5h1M682.5 300V301M682 300.5h1M683.5 301V305M683 304.5h1M684.5 305V306M684 305.5h1M685.5 306V308M685 307.5h1M686.5 308V310M686 309.5h1M687.5 310V311M687 310.5h1h1M689.5 311V313M689 312.5h1M690.5 313V314M690 313.5h1h1M692.5 314V316M692 315.5h1h1h1h1h1h1M698.5 313V315M698 313.5h1h1M700.5 312V313M700 312.5h1h1M702.5 310V312M702 310.5h1M703.5 309V310M703 309.5h1M704.5 307V309M704 307.5h1M705.5 305V307M705 305.5h1M706.5 304V305M706 304.5h1M707.5 302V304M707 302.5h1M708.5 299V302M708 299.5h1M709.5 297V299M709 297.5h1M710.5 294V297M710 294.5h1M711.5 292V294M711 292.5h1M712.5 289V292M712 289.5h1M713.5 288V289M713 288.5h1M714.5 284V288M714 284.5h1M715.5 281V284M715 281.5h1M716.5 278V281M716 278.5h1M717.5 275V278M717 275.5h1M718.5 271V275M718 271.5h1M719.5 270V271M719 270.5h1M720.5 266V270M720 266.5h1M721.5 263V266M721 263.5h1M722.5 260V263M722 260.5h1M723.5 257V260M723 257.5h1M724.5 253V257M724 253.5h1M725.5 250V253M725 250.5h1M726.5 247V250M726 247.5h1M727.5 245V247M727 245.5h1M728.5 242V245M728 242.5h1M729.5 239V242M729 239.5h1M730.5 236V239M730 236.5h1M731.5 234V236M731 234.5h1M732.5 231V234M732 231.5h1M733.5 229V231M733 229.5h1M734.5 226V229M734 226.5h1M735.5 224V226M735 224.5h1M736.5 223V224M736 223.5h1M737.5 221V223M737 221.5h1M738.5 219V221M738 219.5h1M739.5 218V219M739 218.5h1M740.5 216V218M740 216.5h1M741.5 215V216M741 215.5h1h1M743.5 213V215M743 213.5h1h1M745.5 211V213M745 211.5h1h1h1h1h1M750.5 212V214M750 213.5h1h1h1M753.5 214V216M753 215.5h1M754.5 216V217M754 216.5h1M755.5 217V219M755 218.5h1h1M757.5 219V220M757 219.5h1M758.5 220V224M758 223.5h1M759.5 224V225M759 224.5h1M760.5 225V227M760 226.5h1M761.5 227V229M761 228.5h1M762.5 229V232M762 231.5h1M763.5 232V233M763 232.5h1M764.5 233V237M764 236.5h1M765.5 237V240M765 239.5h1M766.5 240V242M766 241.5h1M767.5 242V245M767 244.5h1M768.5 245V248M768 247.5h1M769.5 248V251M769 250.5h1M770.5 251V254M770 253.5h1M771.5 254V258M771 257.5h1" stroke="#efef5e" stroke-width="2.1" fill="none" opacity=".42"/><path d="M251 476.5h1M252.5 477V478M252 477.5h1M253.5 478V481M253 480.5h1M254.5 481V485M254 484.5h1M255.5 485V488M255 487.5h1M256.5 488V491M256 490.5h1M257.5 491V493M257 492.5h1M258.5 493V496M258 495.5h1M259.5 496V498M259 497.5h1M260.5 498V501M260 500.5h1M261.5 501V503M261 502.5h1M262.5 503V506M262 505.5h1M263.5 506V507M263 506.5h1M264.5 507V509M264 508.5h1M265.5 509V511M265 510.5h1M266.5 511V512M266 511.5h1M267.5 512V514M267 513.5h1M268.5 514V515M268 514.5h1M269.5 515V517M269 516.5h1h1M271.5 517V519M271 518.5h1h1h1M274.5 519V520M274 519.5h1h1h1M277.5 518V519M277 518.5h1h1h1M280.5 516V518M280 516.5h1h1M282.5 514V516M282 514.5h1M283.5 513V514M283 513.5h1M284.5 511V513M284 511.5h1M285.5 510V511M285 510.5h1M286.5 508V510M286 508.5h1M287.5 506V508M287 506.5h1M288.5 503V506M288 503.5h1M289.5 502V503M289 502.5h1M290.5 498V502M290 498.5h1M291.5 497V498M291 497.5h1M292.5 493V497M292 493.5h1M293.5 492V493M293 492.5h1M294.5 489V492M294 489.5h1M295.5 485V489M295 485.5h1M296.5 482V485M296 482.5h1M297.5 480V482M297 480.5h1M298.5 477V480M298 477.5h1M299.5 474V477M299 474.5h1M300.5 471V474M300 471.5h1M301.5 468V471M301 468.5h1M302.5 464V468M302 464.5h1M303.5 461V464M303 461.5h1M304.5 458V461M304 458.5h1M305.5 456V458M305 456.5h1M306.5 453V456M306 453.5h1M307.5 450V453M307 450.5h1M308.5 446V450M308 446.5h1M309.5 445V446M309 445.5h1M310.5 442V445M310 442.5h1M311.5 438V442M311 438.5h1M312.5 437V438M312 437.5h1M313.5 433V437M313 433.5h1M314.5 432V433M314 432.5h1M315.5 430V432M315 430.5h1M316.5 427V430M316 427.5h1M317.5 425V427M317 425.5h1M318.5 424V425M318 424.5h1M319.5 422V424M319 422.5h1M320.5 421V422M320 421.5h1h1M322.5 419V421M322 419.5h1M323.5 417V419M323 417.5h1h1h1M326.5 416V417M326 416.5h1h1h1h1M330.5 417V418M330 417.5h1h1M332.5 418V420M332 419.5h1h1M334.5 420V422M334 421.5h1M335.5 422V423M335 422.5h1M336.5 423V425M336 424.5h1M337.5 425V426M337 425.5h1M338.5 426V428M338 427.5h1M339.5 428V430M339 429.5h1M340.5 430V431M340 430.5h1M341.5 431V433M341 432.5h1M342.5 433V436M342 435.5h1M343.5 436V438M343 437.5h1M344.5 438V441M344 440.5h1M345.5 441V444M345 443.5h1M346.5 444V446M346 445.5h1M347.5 446V449M347 448.5h1M348.5 449V452M348 451.5h1M349.5 452V456M349 455.5h1M350.5 456V457M350 456.5h1M351.5 457V460M351 459.5h1M352.5 460V464M352 463.5h1M353.5 464V467M353 466.5h1M354.5 467V470M354 469.5h1M355.5 470V473M355 472.5h1M356.5 473V477M356 476.5h1M357.5 477V480M357 479.5h1M358.5 480V481M358 480.5h1M359.5 481V485M359 484.5h1M360.5 485V488M360 487.5h1M361.5 488V491M361 490.5h1M362.5 491V493M362 492.5h1M363.5 493V496M363 495.5h1M364.5 496V499M364 498.5h1M365.5 499V501M365 500.5h1M366.5 501V503M366 502.5h1M367.5 503V506M367 505.5h1M368.5 506V507M368 506.5h1M369.5 507V509M369 508.5h1M370.5 509V511M370 510.5h1M371.5 511V512M371 511.5h1M372.5 512V514M372 513.5h1M373.5 514V515M373 514.5h1M374.5 515V517M374 516.5h1h1M376.5 517V519M376 518.5h1h1h1M379.5 519V520M379 519.5h1h1h1M382.5 518V519M382 518.5h1h1h1M385.5 516V518M385 516.5h1M386.5 514V516M386 514.5h1h1M388.5 513V514M388 513.5h1M389.5 511V513M389 511.5h1M390.5 510V511M390 510.5h1M391.5 508V510M391 508.5h1M392.5 506V508M392 506.5h1M393.5 503V506M393 503.5h1M394.5 502V503M394 502.5h1M395.5 498V502M395 498.5h1M396.5 497V498M396 497.5h1M397.5 493V497M397 493.5h1M398.5 492V493M398 492.5h1M399.5 489V492M399 489.5h1M400.5 485V489M400 485.5h1M401.5 482V485M401 482.5h1M402.5 480V482M402 480.5h1M403.5 477V480M403 477.5h1M404.5 474V477M404 474.5h1M405.5 471V474M405 471.5h1M406.5 468V471M406 468.5h1M407.5 464V468M407 464.5h1M408.5 461V464M408 461.5h1M409.5 458V461M409 458.5h1M410.5 456V458M410 456.5h1M411.5 453V456M411 453.5h1M412.5 450V453M412 450.5h1M413.5 446V450M413 446.5h1M414.5 443V446M414 443.5h1M415.5 442V443M415 442.5h1M416.5 438V442M416 438.5h1M417.5 437V438M417 437.5h1M418.5 433V437M418 433.5h1M419.5 432V433M419 432.5h1M420.5 429V432M420 429.5h1M421.5 427V429M421 427.5h1M422.5 425V427M422 425.5h1M423.5 424V425M423 424.5h1M424.5 422V424M424 422.5h1M425.5 421V422M425 421.5h1h1M427.5 419V421M427 419.5h1M428.5 417V419M428 417.5h1h1h1M431.5 416V417M431 416.5h1h1h1M434.5 417V418M434 417.5h1h1h1M437.5 418V420M437 419.5h1h1M439.5 420V422M439 421.5h1M440.5 422V423M440 422.5h1M441.5 423V425M441 424.5h1M442.5 425V426M442 425.5h1M443.5 426V428M443 427.5h1M444.5 428V430M444 429.5h1M445.5 430V431M445 430.5h1M446.5 431V433M446 432.5h1M447.5 433V436M447 435.5h1M448.5 436V438M448 437.5h1M449.5 438V441M449 440.5h1M450.5 441V444M450 443.5h1M451.5 444V446M451 445.5h1M452.5 446V449M452 448.5h1M453.5 449V452M453 451.5h1M454.5 452V456M454 455.5h1M455.5 456V457M455 456.5h1M456.5 457V460M456 459.5h1M457.5 460V464M457 463.5h1M458.5 464V467M458 466.5h1M459.5 467V470M459 469.5h1M460.5 470V473M460 472.5h1M461.5 473V477M461 476.5h1M462.5 477V480M462 479.5h1M463.5 480V481M463 480.5h1M464.5 481V485M464 484.5h1M465.5 485V488M465 487.5h1M466.5 488V491M466 490.5h1M467.5 491V493M467 492.5h1M468.5 493V496M468 495.5h1M469.5 496V499M469 498.5h1M470.5 499V501M470 500.5h1M471.5 501V504M471 503.5h1M472.5 504V506M472 505.5h1M473.5 506V507M473 506.5h1M474.5 507V509M474 508.5h1M475.5 509V511M475 510.5h1M476.5 511V512M476 511.5h1M477.5 512V514M477 513.5h1M478.5 514V515M478 514.5h1M479.5 515V517M479 516.5h1h1M481.5 517V519M481 518.5h1h1h1M484.5 519V520M484 519.5h1h1h1M487.5 518V519M487 518.5h1h1h1M490.5 516V518M490 516.5h1M491.5 514V516M491 514.5h1h1M493.5 513V514M493 513.5h1M494.5 511V513M494 511.5h1M495.5 510V511M495 510.5h1M496.5 508V510M496 508.5h1M497.5 505V508M497 505.5h1M498.5 503V505M498 503.5h1M499.5 502V503M499 502.5h1M500.5 498V502M500 498.5h1M501.5 497V498M501 497.5h1M502.5 493V497M502 493.5h1M503.5 492V493M503 492.5h1M504.5 489V492M504 489.5h1M505.5 485V489M505 485.5h1M506.5 482V485M506 482.5h1M507.5 479V482M507 479.5h1M508.5 477V479M508 477.5h1M509.5 474V477M509 474.5h1M510.5 471V474M510 471.5h1M511.5 468V471M511 468.5h1M512.5 464V468M512 464.5h1M513.5 461V464M513 461.5h1M514.5 458V461M514 458.5h1M515.5 455V458M515 455.5h1M516.5 453V455M516 453.5h1M517.5 450V453M517 450.5h1M518.5 446V450M518 446.5h1M519.5 443V446M519 443.5h1M520.5 442V443M520 442.5h1M521.5 438V442M521 438.5h1M522.5 437V438M522 437.5h1M523.5 433V437M523 433.5h1M524.5 432V433M524 432.5h1M525.5 429V432M525 429.5h1M526.5 427V429M526 427.5h1M527.5 425V427M527 425.5h1M528.5 424V425M528 424.5h1M529.5 422V424M529 422.5h1M530.5 421V422M530 421.5h1M531.5 419V421M531 419.5h1h1M533.5 417V419M533 417.5h1h1h1M536.5 416V417M536 416.5h1h1h1M539.5 417V418M539 417.5h1h1h1M542.5 418V420M542 419.5h1h1M544.5 420V422M544 421.5h1M545.5 422V423M545 422.5h1M546.5 423V425M546 424.5h1M547.5 425V426M547 425.5h1M548.5 426V428M548 427.5h1M549.5 428V430M549 429.5h1M550.5 430V431M550 430.5h1M551.5 431V434M551 433.5h1M552.5 434V436M552 435.5h1M553.5 436V438M553 437.5h1M554.5 438V441M554 440.5h1M555.5 441V444M555 443.5h1M556.5 444V446M556 445.5h1M557.5 446V449M557 448.5h1M558.5 449V452M558 451.5h1M559.5 452V456M559 455.5h1M560.5 456V459M560 458.5h1M561.5 459V460M561 459.5h1M562.5 460V464M562 463.5h1M563.5 464V467M563 466.5h1M564.5 467V470M564 469.5h1M565.5 470V473M565 472.5h1M566.5 473V477M566 476.5h1M567.5 477V480M567 479.5h1M568.5 480V483M568 482.5h1M569.5 483V485M569 484.5h1M570.5 485V488M570 487.5h1M571.5 488V491M571 490.5h1M572.5 491V494M572 493.5h1M573.5 494V496M573 495.5h1M574.5 496V499M574 498.5h1M575.5 499V501M575 500.5h1M576.5 501V504M576 503.5h1M577.5 504V506M577 505.5h1M578.5 506V507M578 506.5h1M579.5 507V509M579 508.5h1M580.5 509V512M580 511.5h1h1M582.5 512V514M582 513.5h1M583.5 514V515M583 514.5h1M584.5 515V517M584 516.5h1h1M586.5 517V519M586 518.5h1h1M588.5 519V520M588 519.5h1h1h1h1M592.5 518V519M592 518.5h1h1h1M595.5 516V518M595 516.5h1M596.5 514V516M596 514.5h1h1M598.5 513V514M598 513.5h1M599.5 511V513M599 511.5h1M600.5 510V511M600 510.5h1M601.5 508V510M601 508.5h1M602.5 505V508M602 505.5h1M603.5 503V505M603 503.5h1M604.5 502V503M604 502.5h1M605.5 498V502M605 498.5h1M606.5 497V498M606 497.5h1M607.5 493V497M607 493.5h1M608.5 490V493M608 490.5h1M609.5 489V490M609 489.5h1M610.5 485V489M610 485.5h1M611.5 482V485M611 482.5h1M612.5 479V482M612 479.5h1M613.5 476V479M613 476.5h1M614.5 474V476M614 474.5h1M615.5 471V474M615 471.5h1M616.5 468V471M616 468.5h1M617.5 464V468M617 464.5h1M618.5 461V464M618 461.5h1M619.5 458V461M619 458.5h1M620.5 455V458M620 455.5h1M621.5 453V455M621 453.5h1M622.5 450V453M622 450.5h1M623.5 446V450M623 446.5h1M624.5 443V446M624 443.5h1M625.5 442V443M625 442.5h1M626.5 438V442M626 438.5h1M627.5 435V438M627 435.5h1M628.5 433V435M628 433.5h1M629.5 432V433M629 432.5h1M630.5 429V432M630 429.5h1M631.5 427V429M631 427.5h1M632.5 425V427M632 425.5h1M633.5 424V425M633 424.5h1M634.5 422V424M634 422.5h1M635.5 421V422M635 421.5h1M636.5 419V421M636 419.5h1h1M638.5 417V419M638 417.5h1h1h1M641.5 416V417M641 416.5h1h1h1M644.5 417V418M644 417.5h1h1h1M647.5 418V420M647 419.5h1h1M649.5 420V422M649 421.5h1M650.5 422V423M650 422.5h1M651.5 423V425M651 424.5h1M652.5 425V426M652 425.5h1M653.5 426V428M653 427.5h1M654.5 428V430M654 429.5h1M655.5 430V431M655 430.5h1M656.5 431V434M656 433.5h1M657.5 434V436M657 435.5h1M658.5 436V439M658 438.5h1M659.5 439V441M659 440.5h1M660.5 441V444M660 443.5h1M661.5 444V446M661 445.5h1M662.5 446V449M662 448.5h1M663.5 449V452M663 451.5h1M664.5 452V456M664 455.5h1M665.5 456V459M665 458.5h1M666.5 459V460M666 459.5h1M667.5 460V464M667 463.5h1M668.5 464V467M668 466.5h1M669.5 467V470M669 469.5h1M670.5 470V473M670 472.5h1M671.5 473V477M671 476.5h1M672.5 477V480M672 479.5h1M673.5 480V483M673 482.5h1M674.5 483V485M674 484.5h1M675.5 485V488M675 487.5h1M676.5 488V491M676 490.5h1M677.5 491V494M677 493.5h1M678.5 494V496M678 495.5h1M679.5 496V499M679 498.5h1M680.5 499V501M680 500.5h1M681.5 501V504M681 503.5h1M682.5 504V506M682 505.5h1M683.5 506V507M683 506.5h1M684.5 507V509M684 508.5h1M685.5 509V512M685 511.5h1M686.5 512V514M686 513.5h1h1M688.5 514V515M688 514.5h1M689.5 515V517M689 516.5h1h1M691.5 517V519M691 518.5h1h1M693.5 519V520M693 519.5h1h1h1h1M697.5 518V519M697 518.5h1h1h1M700.5 516V518M700 516.5h1M701.5 514V516M701 514.5h1h1M703.5 513V514M703 513.5h1M704.5 511V513M704 511.5h1M705.5 510V511M705 510.5h1M706.5 508V510M706 508.5h1M707.5 505V508M707 505.5h1M708.5 503V505M708 503.5h1M709.5 502V503M709 502.5h1M710.5 498V502M710 498.5h1M711.5 497V498M711 497.5h1M712.5 493V497M712 493.5h1M713.5 490V493M713 490.5h1M714.5 489V490M714 489.5h1M715.5 485V489M715 485.5h1M716.5 482V485M716 482.5h1M717.5 479V482M717 479.5h1M718.5 476V479M718 476.5h1M719.5 474V476M719 474.5h1M720.5 471V474M720 471.5h1M721.5 468V471M721 468.5h1M722.5 464V468M722 464.5h1M723.5 461V464M723 461.5h1M724.5 458V461M724 458.5h1M725.5 455V458M725 455.5h1M726.5 451V455M726 451.5h1M727.5 450V451M727 450.5h1M728.5 446V450M728 446.5h1M729.5 443V446M729 443.5h1M730.5 442V443M730 442.5h1M731.5 438V442M731 438.5h1M732.5 435V438M732 435.5h1M733.5 433V435M733 433.5h1M734.5 432V433M734 432.5h1M735.5 429V432M735 429.5h1M736.5 427V429M736 427.5h1M737.5 425V427M737 425.5h1M738.5 424V425M738 424.5h1M739.5 422V424M739 422.5h1M740.5 421V422M740 421.5h1M741.5 419V421M741 419.5h1h1M743.5 417V419M743 417.5h1h1h1M746.5 416V417M746 416.5h1h1h1M749.5 417V418M749 417.5h1h1h1M752.5 418V420M752 419.5h1h1M754.5 420V422M754 421.5h1M755.5 422V423M755 422.5h1M756.5 423V425M756 424.5h1M757.5 425V426M757 425.5h1M758.5 426V428M758 427.5h1M759.5 428V430M759 429.5h1M760.5 430V431M760 430.5h1M761.5 431V434M761 433.5h1M762.5 434V436M762 435.5h1M763.5 436V439M763 438.5h1M764.5 439V441M764 440.5h1M765.5 441V444M765 443.5h1M766.5 444V447M766 446.5h1M767.5 447V449M767 448.5h1M768.5 449V452M768 451.5h1M769.5 452V456M769 455.5h1M770.5 456V459M770 458.5h1M771.5 459V462M771 461.5h1" stroke="#aeea56" stroke-width="1" fill="none" shape-rendering="crispEdges"/><path d="M251 476.5h1M252.5 477V478M252 477.5h1M253.5 478V481M253 480.5h1M254.5 481V485M254 484.5h1M255.5 485V488M255 487.5h1M256.5 488V491M256 490.5h1M257.5 491V493M257 492.5h1M258.5 493V496M258 495.5h1M259.5 496V498M259 497.5h1M260.5 498V501M260 500.5h1M261.5 501V503M261 502.5h1M262.5 503V506M262 505.5h1M263.5 506V507M263 506.5h1M264.5 507V509M264 508.5h1M265.5 509V511M265 510.5h1M266.5 511V512M266 511.5h1M267.5 512V514M267 513.5h1M268.5 514V515M268 514.5h1M269.5 515V517M269 516.5h1h1M271.5 517V519M271 518.5h1h1h1M274.5 519V520M274 519.5h1h1h1M277.5 518V519M277 518.5h1h1h1M280.5 516V518M280 516.5h1h1M282.5 514V516M282 514.5h1M283.5 513V514M283 513.5h1M284.5 511V513M284 511.5h1M285.5 510V511M285 510.5h1M286.5 508V510M286 508.5h1M287.5 506V508M287 506.5h1M288.5 503V506M288 503.5h1M289.5 502V503M289 502.5h1M290.5 498V502M290 498.5h1M291.5 497V498M291 497.5h1M292.5 493V497M292 493.5h1M293.5 492V493M293 492.5h1M294.5 489V492M294 489.5h1M295.5 485V489M295 485.5h1M296.5 482V485M296 482.5h1M297.5 480V482M297 480.5h1M298.5 477V480M298 477.5h1M299.5 474V477M299 474.5h1M300.5 471V474M300 471.5h1M301.5 468V471M301 468.5h1M302.5 464V468M302 464.5h1M303.5 461V464M303 461.5h1M304.5 458V461M304 458.5h1M305.5 456V458M305 456.5h1M306.5 453V456M306 453.5h1M307.5 450V453M307 450.5h1M308.5 446V450M308 446.5h1M309.5 445V446M309 445.5h1M310.5 442V445M310 442.5h1M311.5 438V442M311 438.5h1M312.5 437V438M312 437.5h1M313.5 433V437M313 433.5h1M314.5 432V433M314 432.5h1M315.5 430V432M315 430.5h1M316.5 427V430M316 427.5h1M317.5 425V427M317 425.5h1M318.5 424V425M318 424.5h1M319.5 422V424M319 422.5h1M320.5 421V422M320 421.5h1h1M322.5 419V421M322 419.5h1M323.5 417V419M323 417.5h1h1h1M326.5 416V417M326 416.5h1h1h1h1M330.5 417V418M330 417.5h1h1M332.5 418V420M332 419.5h1h1M334.5 420V422M334 421.5h1M335.5 422V423M335 422.5h1M336.5 423V425M336 424.5h1M337.5 425V426M337 425.5h1M338.5 426V428M338 427.5h1M339.5 428V430M339 429.5h1M340.5 430V431M340 430.5h1M341.5 431V433M341 432.5h1M342.5 433V436M342 435.5h1M343.5 436V438M343 437.5h1M344.5 438V441M344 440.5h1M345.5 441V444M345 443.5h1M346.5 444V446M346 445.5h1M347.5 446V449M347 448.5h1M348.5 449V452M348 451.5h1M349.5 452V456M349 455.5h1M350.5 456V457M350 456.5h1M351.5 457V460M351 459.5h1M352.5 460V464M352 463.5h1M353.5 464V467M353 466.5h1M354.5 467V470M354 469.5h1M355.5 470V473M355 472.5h1M356.5 473V477M356 476.5h1M357.5 477V480M357 479.5h1M358.5 480V481M358 480.5h1M359.5 481V485M359 484.5h1M360.5 485V488M360 487.5h1M361.5 488V491M361 490.5h1M362.5 491V493M362 492.5h1M363.5 493V496M363 495.5h1M364.5 496V499M364 498.5h1M365.5 499V501M365 500.5h1M366.5 501V503M366 502.5h1M367.5 503V506M367 505.5h1M368.5 506V507M368 506.5h1M369.5 507V509M369 508.5h1M370.5 509V511M370 510.5h1M371.5 511V512M371 511.5h1M372.5 512V514M372 513.5h1M373.5 514V515M373 514.5h1M374.5 515V517M374 516.5h1h1M376.5 517V519M376 518.5h1h1h1M379.5 519V520M379 519.5h1h1h1M382.5 518V519M382 518.5h1h1h1M385.5 516V518M385 516.5h1M386.5 514V516M386 514.5h1h1M388.5 513V514M388 513.5h1M389.5 511V513M389 511.5h1M390.5 510V511M390 510.5h1M391.5 508V510M391 508.5h1M392.5 506V508M392 506.5h1M393.5 503V506M393 503.5h1M394.5 502V503M394 502.5h1M395.5 498V502M395 498.5h1M396.5 497V498M396 497.5h1M397.5 493V497M397 493.5h1M398.5 492V493M398 492.5h1M399.5 489V492M399 489.5h1M400.5 485V489M400 485.5h1M401.5 482V485M401 482.5h1M402.5 480V482M402 480.5h1M403.5 477V480M403 477.5h1M404.5 474V477M404 474.5h1M405.5 471V474M405 471.5h1M406.5 468V471M406 468.5h1M407.5 464V468M407 464.5h1M408.5 461V464M408 461.5h1M409.5 458V461M409 458.5h1M410.5 456V458M410 456.5h1M411.5 453V456M411 453.5h1M412.5 450V453M412 450.5h1M413.5 446V450M413 446.5h1M414.5 443V446M414 443.5h1M415.5 442V443M415 442.5h1M416.5 438V442M416 438.5h1M417.5 437V438M417 437.5h1M418.5 433V437M418 433.5h1M419.5 432V433M419 432.5h1M420.5 429V432M420 429.5h1M421.5 427V429M421 427.5h1M422.5 425V427M422 425.5h1M423.5 424V425M423 424.5h1M424.5 422V424M424 422.5h1M425.5 421V422M425 421.5h1h1M427.5 419V421M427 419.5h1M428.5 417V419M428 417.5h1h1h1M431.5 416V417M431 416.5h1h1h1M434.5 417V418M434 417.5h1h1h1M437.5 418V420M437 419.5h1h1M439.5 420V422M439 421.5h1M440.5 422V423M440 422.5h1M441.5 423V425M441 424.5h1M442.5 425V426M442 425.5h1M443.5 426V428M443 427.5h1M444.5 428V430M444 429.5h1M445.5 430V431M445 430.5h1M446.5 431V433M446 432.5h1M447.5 433V436M447 435.5h1M448.5 436V438M448 437.5h1M449.5 438V441M449 440.5h1M450.5 441V444M450 443.5h1M451.5 444V446M451 445.5h1M452.5 446V449M452 448.5h1M453.5 449V452M453 451.5h1M454.5 452V456M454 455.5h1M455.5 456V457M455 456.5h1M456.5 457V460M456 459.5h1M457.5 460V464M457 463.5h1M458.5 464V467M458 466.5h1M459.5 467V470M459 469.5h1M460.5 470V473M460 472.5h1M461.5 473V477M461 476.5h1M462.5 477V480M462 479.5h1M463.5 480V481M463 480.5h1M464.5 481V485M464 484.5h1M465.5 485V488M465 487.5h1M466.5 488V491M466 490.5h1M467.5 491V493M467 492.5h1M468.5 493V496M468 495.5h1M469.5 496V499M469 498.5h1M470.5 499V501M470 500.5h1M471.5 501V504M471 503.5h1M472.5 504V506M472 505.5h1M473.5 506V507M473 506.5h1M474.5 507V509M474 508.5h1M475.5 509V511M475 510.5h1M476.5 511V512M476 511.5h1M477.5 512V514M477 513.5h1M478.5 514V515M478 514.5h1M479.5 515V517M479 516.5h1h1M481.5 517V519M481 518.5h1h1h1M484.5 519V520M484 519.5h1h1h1M487.5 518V519M487 518.5h1h1h1M490.5 516V518M490 516.5h1M491.5 514V516M491 514.5h1h1M493.5 513V514M493 513.5h1M494.5 511V513M494 511.5h1M495.5 510V511M495 510.5h1M496.5 508V510M496 508.5h1M497.5 505V508M497 505.5h1M498.5 503V505M498 503.5h1M499.5 502V503M499 502.5h1M500.5 498V502M500 498.5h1M501.5 497V498M501 497.5h1M502.5 493V497M502 493.5h1M503.5 492V493M503 492.5h1M504.5 489V492M504 489.5h1M505.5 485V489M505 485.5h1M506.5 482V485M506 482.5h1M507.5 479V482M507 479.5h1M508.5 477V479M508 477.5h1M509.5 474V477M509 474.5h1M510.5 471V474M510 471.5h1M511.5 468V471M511 468.5h1M512.5 464V468M512 464.5h1M513.5 461V464M513 461.5h1M514.5 458V461M514 458.5h1M515.5 455V458M515 455.5h1M516.5 453V455M516 453.5h1M517.5 450V453M517 450.5h1M518.5 446V450M518 446.5h1M519.5 443V446M519 443.5h1M520.5 442V443M520 442.5h1M521.5 438V442M521 438.5h1M522.5 437V438M522 437.5h1M523.5 433V437M523 433.5h1M524.5 432V433M524 432.5h1M525.5 429V432M525 429.5h1M526.5 427V429M526 427.5h1M527.5 425V427M527 425.5h1M528.5 424V425M528 424.5h1M529.5 422V424M529 422.5h1M530.5 421V422M530 421.5h1M531.5 419V421M531 419.5h1h1M533.5 417V419M533 417.5h1h1h1M536.5 416V417M536 416.5h1h1h1M539.5 417V418M539 417.5h1h1h1M542.5 418V420M542 419.5h1h1M544.5 420V422M544 421.5h1M545.5 422V423M545 422.5h1M546.5 423V425M546 424.5h1M547.5 425V426M547 425.5h1M548.5 426V428M548 427.5h1M549.5 428V430M549 429.5h1M550.5 430V431M550 430.5h1M551.5 431V434M551 433.5h1M552.5 434V436M552 435.5h1M553.5 436V438M553 437.5h1M554.5 438V441M554 440.5h1M555.5 441V444M555 443.5h1M556.5 444V446M556 445.5h1M557.5 446V449M557 448.5h1M558.5 449V452M558 451.5h1M559.5 452V456M559 455.5h1M560.5 456V459M560 458.5h1M561.5 459V460M561 459.5h1M562.5 460V464M562 463.5h1M563.5 464V467M563 466.5h1M564.5 467V470M564 469.5h1M565.5 470V473M565 472.5h1M566.5 473V477M566 476.5h1M567.5 477V480M567 479.5h1M568.5 480V483M568 482.5h1M569.5 483V485M569 484.5h1M570.5 485V488M570 487.5h1M571.5 488V491M571 490.5h1M572.5 491V494M572 493.5h1M573.5 494V496M573 495.5h1M574.5 496V499M574 498.5h1M575.5 499V501M575 500.5h1M576.5 501V504M576 503.5h1M577.5 504V506M577 505.5h1M578.5 506V507M578 506.5h1M579.5 507V509M579 508.5h1M580.5 509V512M580 511.5h1h1M582.5 512V514M582 513.5h1M583.5 514V515M583 514.5h1M584.5 515V517M584 516.5h1h1M586.5 517V519M586 518.5h1h1M588.5 519V520M588 519.5h1h1h1h1M592.5 518V519M592 518.5h1h1h1M595.5 516V518M595 516.5h1M596.5 514V516M596 514.5h1h1M598.5 513V514M598 513.5h1M599.5 511V513M599 511.5h1M600.5 510V511M600 510.5h1M601.5 508V510M601 508.5h1M602.5 505V508M602 505.5h1M603.5 503V505M603 503.5h1M604.5 502V503M604 502.5h1M605.5 498V502M605 498.5h1M606.5 497V498M606 497.5h1M607.5 493V497M607 493.5h1M608.5 490V493M608 490.5h1M609.5 489V490M609 489.5h1M610.5 485V489M610 485.5h1M611.5 482V485M611 482.5h1M612.5 479V482M612 479.5h1M613.5 476V479M613 476.5h1M614.5 474V476M614 474.5h1M615.5 471V474M615 471.5h1M616.5 468V471M616 468.5h1M617.5 464V468M617 464.5h1M618.5 461V464M618 461.5h1M619.5 458V461M619 458.5h1M620.5 455V458M620 455.5h1M621.5 453V455M621 453.5h1M622.5 450V453M622 450.5h1M623.5 446V450M623 446.5h1M624.5 443V446M624 443.5h1M625.5 442V443M625 442.5h1M626.5 438V442M626 438.5h1M627.5 435V438M627 435.5h1M628.5 433V435M628 433.5h1M629.5 432V433M629 432.5h1M630.5 429V432M630 429.5h1M631.5 427V429M631 427.5h1M632.5 425V427M632 425.5h1M633.5 424V425M633 424.5h1M634.5 422V424M634 422.5h1M635.5 421V422M635 421.5h1M636.5 419V421M636 419.5h1h1M638.5 417V419M638 417.5h1h1h1M641.5 416V417M641 416.5h1h1h1M644.5 417V418M644 417.5h1h1h1M647.5 418V420M647 419.5h1h1M649.5 420V422M649 421.5h1M650.5 422V423M650 422.5h1M651.5 423V425M651 424.5h1M652.5 425V426M652 425.5h1M653.5 426V428M653 427.5h1M654.5 428V430M654 429.5h1M655.5 430V431M655 430.5h1M656.5 431V434M656 433.5h1M657.5 434V436M657 435.5h1M658.5 436V439M658 438.5h1M659.5 439V441M659 440.5h1M660.5 441V444M660 443.5h1M661.5 444V446M661 445.5h1M662.5 446V449M662 448.5h1M663.5 449V452M663 451.5h1M664.5 452V456M664 455.5h1M665.5 456V459M665 458.5h1M666.5 459V460M666 459.5h1M667.5 460V464M667 463.5h1M668.5 464V467M668 466.5h1M669.5 467V470M669 469.5h1M670.5 470V473M670 472.5h1M671.5 473V477M671 476.5h1M672.5 477V480M672 479.5h1M673.5 480V483M673 482.5h1M674.5 483V485M674 484.5h1M675.5 485V488M675 487.5h1M676.5 488V491M676 490.5h1M677.5 491V494M677 493.5h1M678.5 494V496M678 495.5h1M679.5 496V499M679 498.5h1M680.5 499V501M680 500.5h1M681.5 501V504M681 503.5h1M682.5 504V506M682 505.5h1M683.5 506V507M683 506.5h1M684.5 507V509M684 508.5h1M685.5 509V512M685 511.5h1M686.5 512V514M686 513.5h1h1M688.5 514V515M688 514.5h1M689.5 515V517M689 516.5h1h1M691.5 517V519M691 518.5h1h1M693.5 519V520M693 519.5h1h1h1h1M697.5 518V519M697 518.5h1h1h1M700.5 516V518M700 516.5h1M701.5 514V516M701 514.5h1h1M703.5 513V514M703 513.5h1M704.5 511V513M704 511.5h1M705.5 510V511M705 510.5h1M706.5 508V510M706 508.5h1M707.5 505V508M707 505.5h1M708.5 503V505M708 503.5h1M709.5 502V503M709 502.5h1M710.5 498V502M710 498.5h1M711.5 497V498M711 497.5h1M712.5 493V497M712 493.5h1M713.5 490V493M713 490.5h1M714.5 489V490M714 489.5h1M715.5 485V489M715 485.5h1M716.5 482V485M716 482.5h1M717.5 479V482M717 479.5h1M718.5 476V479M718 476.5h1M719.5 474V476M719 474.5h1M720.5 471V474M720 471.5h1M721.5 468V471M721 468.5h1M722.5 464V468M722 464.5h1M723.5 461V464M723 461.5h1M724.5 458V461M724 458.5h1M725.5 455V458M725 455.5h1M726.5 451V455M726 451.5h1M727.5 450V451M727 450.5h1M728.5 446V450M728 446.5h1M729.5 443V446M729 443.5h1M730.5 442V443M730 442.5h1M731.5 438V442M731 438.5h1M732.5 435V438M732 435.5h1M733.5 433V435M733 433.5h1M734.5 432V433M734 432.5h1M735.5 429V432M735 429.5h1M736.5 427V429M736 427.5h1M737.5 425V427M737 425.5h1M738.5 424V425M738 424.5h1M739.5 422V424M739 422.5h1M740.5 421V422M740 421.5h1M741.5 419V421M741 419.5h1h1M743.5 417V419M743 417.5h1h1h1M746.5 416V417M746 416.5h1h1h1M749.5 417V418M749 417.5h1h1h1M752.5 418V420M752 419.5h1h1M754.5 420V422M754 421.5h1M755.5 422V423M755 422.5h1M756.5 423V425M756 424.5h1M757.5 425V426M757 425.5h1M758.5 426V428M758 427.5h1M759.5 428V430M759 429.5h1M760.5 430V431M760 430.5h1M761.5 431V434M761 433.5h1M762.5 434V436M762 435.5h1M763.5 436V439M763 438.5h1M764.5 439V441M764 440.5h1M765.5 441V444M765 443.5h1M766.5 444V447M766 446.5h1M767.5 447V449M767 448.5h1M768.5 449V452M768 451.5h1M769.5 452V456M769 455.5h1M770.5 456V459M770 458.5h1M771.5 459V462M771 461.5h1" stroke="#aeea56" stroke-width="2.1" fill="none" opacity=".42"/></svg>
<svg style="left:229px;top:257px;" width="19" height="13" viewBox="0 0 19 13"><path d="M.5 .8h12.2l5.3 5.5-5.3 5.5H.5z" fill="#f1f135"/></svg>
<svg style="left:229px;top:461px;" width="19" height="13" viewBox="0 0 19 13"><path d="M.5 .8h12.2l5.3 5.5-5.3 5.5H.5z" fill="#9fe93e"/></svg>
<svg style="left:775px;top:273.5px;" width="19" height="12" viewBox="0 0 19 12"><path d="M18 .5H6.8L.8 5.8l6 5.3H18z" fill="#f1f135"/></svg>
<div style="left:248.5px;top:572px;width:92.5px;height:19px;background:#000;"></div>
<div class="t a" style="left:251.5px;top:574px;color:#eaea55;">CH1</div>
<svg style="left:278.5px;top:577px;" width="12" height="8" viewBox="0 0 12 8"><path d="M0 6.5h11.5" stroke="#eaea55" stroke-width="1.2"/><path d="M.5 3h10.5" stroke="#eaea55" stroke-width="1.2" stroke-dasharray="2.2 1.8"/></svg>
<div class="t a" style="left:300.5px;top:574px;color:#eaea55;">1.00V</div>
<div style="left:388.5px;top:572px;width:92.5px;height:19px;background:#000;"></div>
<div class="t a" style="left:391.5px;top:574px;color:#9fe843;">CH2</div>
<svg style="left:418px;top:577px;" width="12" height="8" viewBox="0 0 12 8"><path d="M0 6.5h11.5" stroke="#9fe843" stroke-width="1.2"/><path d="M.5 3h10.5" stroke="#9fe843" stroke-width="1.2" stroke-dasharray="2.2 1.8"/></svg>
<div class="t a" style="left:440.5px;top:574px;color:#9fe843;">1.00V</div>
<div style="left:563.5px;top:572px;width:210px;height:19px;background:#000;"></div>
<div class="t a" style="left:566.5px;top:574px;color:#dc9a48;">Time: 500.0us</div>
<div class="t a" style="left:663.5px;top:574px;color:#dc9a48;">Sample Rate: 1MHz</div>
<div class="t a" style="left:234px;top:255.3px;color:#000;font-size:10.5px;font-weight:bold;">1</div>
<div class="t a" style="left:233.4px;top:459.3px;color:#000;font-size:10.5px;font-weight:bold;">2</div>
<div class="t a" style="left:783px;top:271.6px;color:#222200;font-size:10.5px;font-weight:bold;">T</div>
<div style="left:799.5px;top:92px;width:4.5px;height:512px;background:#f5f7fc;"></div>
<div style="left:804px;top:92px;width:200px;height:508px;background:#f0f0f0;"></div>
<div style="left:804px;top:92px;width:200px;height:20px;background:linear-gradient(180deg,#c9d1e5,#dfe4f0);"></div>
<div class="t s" style="left:808.5px;top:94px;color:#5b6270;font-size:11.4px;">Control Panel</div>
<svg style="left:974px;top:98.4px;" width="8" height="9" viewBox="0 0 8 9"><path d="M2 .8h4M2.6 .8v4.2M5.6 .8v4.2M.6 5.4h6.8M4 5.4v3.4" fill="none" stroke="#000" stroke-width="1.3"/><rect x="4.6" y="1" width="1.2" height="4" fill="#000"/></svg>
<svg style="left:990px;top:98.4px;" width="9" height="8" viewBox="0 0 9 8"><path d="M1 .6l7 6.6M8 .6l-7 6.6" fill="none" stroke="#000" stroke-width="1.9"/></svg>
<div style="left:804px;top:112px;width:200px;height:23px;background:#dfe4f0;"></div>
<div style="left:804.5px;top:112.5px;width:199px;height:22px;border:1px solid #8e8f8f;border-radius:3px;background:linear-gradient(180deg,#f6f6f6 0,#ececec 45%,#dedede 55%,#d6d6d6 100%);box-shadow:inset 0 0 0 1px rgba(255,255,255,.6);"></div>
<div class="t s" style="left:807.8px;top:115.5px;font-size:11.2px;">Scope</div>
<svg style="left:991.5px;top:121.9px;" width="8" height="4" viewBox="0 0 8 4"><path d="M0 0h7.4l-3.7 4z" fill="#000"/></svg>
<div style="left:804px;top:134.5px;width:200px;height:25px;background:linear-gradient(180deg,#fdfdff 0,#f0f1f7 35%,#d7d9e6 75%,#c4c7d8 100%);"></div>
<div style="left:804px;top:159.5px;width:184px;height:424px;overflow:hidden;background:#f0f0f0;">
<div style="left:5.5px;top:11.5px;width:182px;height:117.5px;border:1px solid #dcdcdc;box-shadow:inset 1px 1px 0 #f9f9f9, 1px 1px 0 #f9f9f9;border-radius:1px;"></div>
<div style="left:80.5px;top:9.5px;width:54px;height:5px;background:#f0f0f0;"></div>
<div class="t c" style="left:83.5px;top:2.8000000000000114px;">Horizontal</div>
<div style="left:5.5px;top:149.0px;width:182px;height:300px;border:1px solid #dcdcdc;box-shadow:inset 1px 1px 0 #f9f9f9, 1px 1px 0 #f9f9f9;border-radius:1px;"></div>
<div style="left:86.5px;top:147.0px;width:42px;height:5px;background:#f0f0f0;"></div>
<div class="t c" style="left:89.5px;top:140.3px;">Vertical</div>
<div class="t c" style="left:15px;top:23.19999999999999px;letter-spacing:-.45px;">Time/DIV</div>
<div class="t c" style="left:15px;top:73.30000000000001px;letter-spacing:-.3px;">Format</div>
<div class="t c" style="left:30px;top:164.8px;letter-spacing:-.5px;">CH1</div>
<div class="t c" style="left:30px;top:304.8px;letter-spacing:-.5px;">CH2</div>
<div class="t c" style="left:141px;top:262.8px;">Invert</div>
<div class="t c" style="left:141px;top:402.79999999999995px;">Invert</div>
<svg style="left:0px;top:0px;" width="184" height="424" viewBox="0 0 184 424"><path d="M122.5 102.9A36.4 36.4 0 1 1 173.1 102.9" fill="none" stroke="#000" stroke-width="1"/><path d="M127.8 98.7L117.3 107.7M171.8 100.2L179.8 107.7" stroke="#000" stroke-width="1.3"/><circle cx="147.79999999999995" cy="76.69999999999999" r="32.8" fill="#c9c9c3" stroke="#000" stroke-width="1"/><path d="M169.3 56.2l4.2-3.6" stroke="#666" stroke-width="2.2"/><circle cx="147.79999999999995" cy="76.69999999999999" r="27.6" fill="#2212d6" stroke="#000" stroke-width=".9"/><path d="M150.60000000000002 72.5L156.39999999999998 54.900000000000006" stroke="#fff" stroke-width="1.8"/><path d="M123.2 238.0A36.4 36.4 0 1 1 173.8 238.0" fill="none" stroke="#000" stroke-width="1"/><path d="M128.5 233.8L118.0 242.8M172.5 235.3L180.5 242.8" stroke="#000" stroke-width="1.3"/><circle cx="148.5" cy="211.8" r="32.8" fill="#c9c9c3" stroke="#000" stroke-width="1"/><path d="M170.0 191.3l4.2-3.6" stroke="#666" stroke-width="2.2"/><circle cx="148.5" cy="211.8" r="27.6" fill="#fdfd3f" stroke="#000" stroke-width=".9"/><path d="M130.5 198.3L143.89999999999998 207.5" stroke="#f3f3ae" stroke-width="1.8"/><path d="M123.2 379.7A36.4 36.4 0 1 1 173.8 379.7" fill="none" stroke="#000" stroke-width="1"/><path d="M128.5 375.5L118.0 384.5M172.5 377.0L180.5 384.5" stroke="#000" stroke-width="1.3"/><circle cx="148.5" cy="353.5" r="32.8" fill="#c9c9c3" stroke="#000" stroke-width="1"/><path d="M170.0 333.0l4.2-3.6" stroke="#666" stroke-width="2.2"/><circle cx="148.5" cy="353.5" r="27.6" fill="#98fb3d" stroke="#000" stroke-width=".9"/><path d="M129.70000000000005 340.1L143.89999999999998 350.0" stroke="#e4f8b4" stroke-width="1.8"/></svg>
</div>
<div style="left:818px;top:203.3px;width:74px;height:22px;border:1px solid #8e8f8f;border-radius:3px;background:linear-gradient(180deg,#f6f6f6 0,#ececec 45%,#dedede 55%,#d6d6d6 100%);box-shadow:inset 0 0 0 1px rgba(255,255,255,.6);"></div>
<div class="t c" style="left:822.5px;top:206.3px;letter-spacing:-.15px;">500.0us</div>
<svg style="left:880px;top:212.70000000000002px;" width="8" height="4" viewBox="0 0 8 4"><path d="M0 0h7.4l-3.7 4z" fill="#000"/></svg>
<div style="left:818px;top:255px;width:74px;height:22px;border:1px solid #8e8f8f;border-radius:3px;background:linear-gradient(180deg,#f6f6f6 0,#ececec 45%,#dedede 55%,#d6d6d6 100%);box-shadow:inset 0 0 0 1px rgba(255,255,255,.6);"></div>
<div class="t c" style="left:822.5px;top:258.0px;color:#555;">Y-T</div>
<svg style="left:880px;top:264.4px;" width="8" height="4" viewBox="0 0 8 4"><path d="M0 0h7.4l-3.7 4z" fill="#000"/></svg>
<div style="left:818px;top:346px;width:74px;height:22px;border:1px solid #8e8f8f;border-radius:3px;background:linear-gradient(180deg,#f6f6f6 0,#ececec 45%,#dedede 55%,#d6d6d6 100%);box-shadow:inset 0 0 0 1px rgba(255,255,255,.6);"></div>
<div class="t c" style="left:822.5px;top:349.0px;">1.00V</div>
<svg style="left:880px;top:355.4px;" width="8" height="4" viewBox="0 0 8 4"><path d="M0 0h7.4l-3.7 4z" fill="#000"/></svg>
<div style="left:818px;top:416.3px;width:74px;height:22px;border:1px solid #8e8f8f;border-radius:3px;background:linear-gradient(180deg,#f6f6f6 0,#ececec 45%,#dedede 55%,#d6d6d6 100%);box-shadow:inset 0 0 0 1px rgba(255,255,255,.6);"></div>
<div class="t c" style="left:822.5px;top:419.3px;">x1</div>
<svg style="left:880px;top:425.7px;" width="8" height="4" viewBox="0 0 8 4"><path d="M0 0h7.4l-3.7 4z" fill="#000"/></svg>
<div style="left:818px;top:486.5px;width:74px;height:22px;border:1px solid #8e8f8f;border-radius:3px;background:linear-gradient(180deg,#f6f6f6 0,#ececec 45%,#dedede 55%,#d6d6d6 100%);box-shadow:inset 0 0 0 1px rgba(255,255,255,.6);"></div>
<div class="t c" style="left:822.5px;top:489.5px;">1.00V</div>
<svg style="left:880px;top:495.9px;" width="8" height="4" viewBox="0 0 8 4"><path d="M0 0h7.4l-3.7 4z" fill="#000"/></svg>
<div style="left:818px;top:556.5px;width:74px;height:22px;border:1px solid #8e8f8f;border-radius:3px;background:linear-gradient(180deg,#f6f6f6 0,#ececec 45%,#dedede 55%,#d6d6d6 100%);box-shadow:inset 0 0 0 1px rgba(255,255,255,.6);"></div>
<div class="t c" style="left:822.5px;top:559.5px;">x1</div>
<svg style="left:880px;top:565.9px;" width="8" height="4" viewBox="0 0 8 4"><path d="M0 0h7.4l-3.7 4z" fill="#000"/></svg>
<div style="left:818px;top:325.5px;width:13px;height:13px;border:1px solid #8e8f8f;background:#f4f4f4;"></div>
<div style="left:820px;top:327.5px;width:9px;height:9px;background:linear-gradient(135deg,#d9dadb,#f6f6f6 80%);border:1px solid #c3c4c5;border-right-color:#e8e8e8;border-bottom-color:#e8e8e8;"></div>
<svg style="left:818px;top:325.5px;" width="13" height="13" viewBox="0 0 13 13"><path d="M3 6.4l2.3 3.2 4.6-6.6" fill="none" stroke="#4b5f97" stroke-width="1.9"/></svg>
<div style="left:818px;top:465.5px;width:13px;height:13px;border:1px solid #8e8f8f;background:#f4f4f4;"></div>
<div style="left:820px;top:467.5px;width:9px;height:9px;background:linear-gradient(135deg,#d9dadb,#f6f6f6 80%);border:1px solid #c3c4c5;border-right-color:#e8e8e8;border-bottom-color:#e8e8e8;"></div>
<svg style="left:818px;top:465.5px;" width="13" height="13" viewBox="0 0 13 13"><path d="M3 6.4l2.3 3.2 4.6-6.6" fill="none" stroke="#4b5f97" stroke-width="1.9"/></svg>
<div style="left:929px;top:423.3px;width:13px;height:13px;border:1px solid #8e8f8f;background:#f4f4f4;"></div>
<div style="left:931px;top:425.3px;width:9px;height:9px;background:linear-gradient(135deg,#d9dadb,#f6f6f6 80%);border:1px solid #c3c4c5;border-right-color:#e8e8e8;border-bottom-color:#e8e8e8;"></div>
<div style="left:929px;top:563.3px;width:13px;height:13px;border:1px solid #8e8f8f;background:#f4f4f4;"></div>
<div style="left:931px;top:565.3px;width:9px;height:9px;background:linear-gradient(135deg,#d9dadb,#f6f6f6 80%);border:1px solid #c3c4c5;border-right-color:#e8e8e8;border-bottom-color:#e8e8e8;"></div>
<div style="left:988px;top:159.5px;width:16px;height:424px;background:linear-gradient(90deg,#e2e2e2,#f2f2f2 45%,#efefef);"></div>
<svg style="left:992.5px;top:165.5px;" width="8" height="5" viewBox="0 0 8 5"><path d="M0 4.5h8L4 0z" fill="#505050"/></svg>
<svg style="left:992.5px;top:573.5px;" width="8" height="5" viewBox="0 0 8 5"><path d="M0 0h8L4 4.5z" fill="#505050"/></svg>
<div style="left:989px;top:177.5px;width:14.5px;height:211px;border:1px solid #979797;border-radius:3px;background:linear-gradient(90deg,#f4f4f4 0,#e9e9e9 48%,#d6d6d6 52%,#cfcfcf 100%);"></div>
<div style="left:992.5px;top:279.5px;width:7px;height:1px;background:#5a5a5a;"></div>
<div style="left:992.5px;top:282.1px;width:7px;height:1px;background:#5a5a5a;"></div>
<div style="left:992.5px;top:284.7px;width:7px;height:1px;background:#5a5a5a;"></div>
<div style="left:804px;top:583.5px;width:184px;height:17px;background:linear-gradient(180deg,#e4e4e4,#f3f3f3 50%,#efefef);"></div>
<svg style="left:810.5px;top:588.0px;" width="4" height="7" viewBox="0 0 4 7"><path d="M4 0v7L0 3.5z" fill="#404040"/></svg>
<svg style="left:977px;top:588.0px;" width="4" height="7" viewBox="0 0 4 7"><path d="M0 0v7L4 3.5z" fill="#404040"/></svg>
<div style="left:822px;top:584.3px;width:125px;height:14.2px;border:1px solid #979797;border-radius:3px;background:linear-gradient(180deg,#f4f4f4 0,#e9e9e9 48%,#d6d6d6 52%,#cfcfcf 100%);"></div>
<div style="left:881.0px;top:588.0px;width:1px;height:7px;background:#5a5a5a;"></div>
<div style="left:883.6px;top:588.0px;width:1px;height:7px;background:#5a5a5a;"></div>
<div style="left:886.2px;top:588.0px;width:1px;height:7px;background:#5a5a5a;"></div>
<div style="left:988px;top:583.5px;width:16px;height:16.5px;background:#efefef;"></div>
<div style="left:222px;top:600px;width:782px;height:5px;background:#f5f7fc;"></div>
<div style="left:222px;top:605px;width:782px;height:207px;background:#fff;"></div>
<div style="left:222px;top:605px;width:782px;height:18.5px;background:linear-gradient(180deg,#c6cee3,#dee3f0);"></div>
<div class="t s" style="left:226.5px;top:606.3px;color:#5b6270;font-size:11px;letter-spacing:.75px;">Output</div>
<svg style="left:974px;top:611.4px;" width="8" height="9" viewBox="0 0 8 9"><path d="M2 .8h4M2.6 .8v4.2M5.6 .8v4.2M.6 5.4h6.8M4 5.4v3.4" fill="none" stroke="#000" stroke-width="1.3"/><rect x="4.6" y="1" width="1.2" height="4" fill="#000"/></svg>
<svg style="left:990px;top:611.4px;" width="9" height="8" viewBox="0 0 9 8"><path d="M1 .6l7 6.6M8 .6l-7 6.6" fill="none" stroke="#000" stroke-width="1.9"/></svg>
<div style="left:222px;top:623.5px;width:19px;height:188.5px;background:#f0f0f0;"></div>
<div style="left:222px;top:623.5px;width:766px;height:188.5px;overflow:hidden;">
<div style="left:0px;top:-0.3px;width:766px;height:19.3px;background:#f0f0f0;"></div>
<div style="left:5px;top:4.5px;width:9px;height:9px;border:1px solid #8c8c8c;background:#fafafa;"></div>
<div style="left:7px;top:8.5px;width:5px;height:1px;background:#505050;"></div>
<div class="t s" style="left:23px;top:1.0px;font-weight:bold;color:#7c7c7c;font-size:11.8px;letter-spacing:-.3px;">CH1</div>
<div style="left:19px;top:37.0px;width:747px;height:1px;background:#f0f0f0;"></div>
<div class="t s" style="left:23.3px;top:20.3px;font-size:11.5px;letter-spacing:-.15px;">Peak to Peak</div>
<div class="t s" style="left:101.8px;top:20.3px;font-size:11.5px;letter-spacing:-.1px;">2.07V</div>
<div style="left:19px;top:56.0px;width:747px;height:1px;background:#f0f0f0;"></div>
<div class="t s" style="left:23.3px;top:39.300000000000004px;font-size:11.5px;letter-spacing:-.15px;">Amplitude</div>
<div class="t s" style="left:101.8px;top:39.300000000000004px;font-size:11.5px;letter-spacing:-.1px;">2.07V</div>
<div style="left:19px;top:75.0px;width:747px;height:1px;background:#f0f0f0;"></div>
<div class="t s" style="left:23.3px;top:58.300000000000004px;font-size:11.5px;letter-spacing:-.15px;">Period</div>
<div class="t s" style="left:101.8px;top:58.300000000000004px;font-size:11.5px;letter-spacing:-.1px;">998uS</div>
<div style="left:19px;top:94.0px;width:747px;height:1px;background:#f0f0f0;"></div>
<div class="t s" style="left:23.3px;top:77.3px;font-size:11.5px;letter-spacing:-.15px;">Frequency</div>
<div class="t s" style="left:101.8px;top:77.3px;font-size:11.5px;letter-spacing:-.1px;">1.002KHz</div>
<div style="left:0px;top:94.7px;width:766px;height:19.3px;background:#f0f0f0;"></div>
<div style="left:5px;top:99.5px;width:9px;height:9px;border:1px solid #8c8c8c;background:#fafafa;"></div>
<div style="left:7px;top:103.5px;width:5px;height:1px;background:#505050;"></div>
<div class="t s" style="left:23px;top:96.0px;font-weight:bold;color:#7c7c7c;font-size:11.8px;letter-spacing:-.3px;">CH2</div>
<div style="left:19px;top:132.0px;width:747px;height:1px;background:#f0f0f0;"></div>
<div class="t s" style="left:23.3px;top:115.3px;font-size:11.5px;letter-spacing:-.15px;">Peak to Peak</div>
<div class="t s" style="left:101.8px;top:115.3px;font-size:11.5px;letter-spacing:-.1px;">2.07V</div>
<div style="left:19px;top:151.0px;width:747px;height:1px;background:#f0f0f0;"></div>
<div class="t s" style="left:23.3px;top:134.29999999999998px;font-size:11.5px;letter-spacing:-.15px;">Amplitude</div>
<div class="t s" style="left:101.8px;top:134.29999999999998px;font-size:11.5px;letter-spacing:-.1px;">2.07V</div>
<div style="left:19px;top:170.0px;width:747px;height:1px;background:#f0f0f0;"></div>
<div class="t s" style="left:23.3px;top:153.29999999999998px;font-size:11.5px;letter-spacing:-.15px;">Period</div>
<div class="t s" style="left:101.8px;top:153.29999999999998px;font-size:11.5px;letter-spacing:-.1px;">1.00mS</div>
<div style="left:19px;top:189.0px;width:747px;height:1px;background:#f0f0f0;"></div>
<div class="t s" style="left:23.3px;top:172.29999999999998px;font-size:11.5px;letter-spacing:-.15px;">Frequency</div>
<div class="t s" style="left:101.8px;top:172.29999999999998px;font-size:11.5px;letter-spacing:-.1px;">1.000KHz</div>
<div style="left:96.5px;top:19px;width:1px;height:170px;background:#f0f0f0;"></div>
</div>
<div style="left:988px;top:623.5px;width:16px;height:188.5px;background:linear-gradient(90deg,#e2e2e2,#f2f2f2 45%,#efefef);"></div>
<svg style="left:992.5px;top:629.5px;" width="8" height="5" viewBox="0 0 8 5"><path d="M0 4.5h8L4 0z" fill="#505050"/></svg>
<svg style="left:992.5px;top:802.0px;" width="8" height="5" viewBox="0 0 8 5"><path d="M0 0h8L4 4.5z" fill="#505050"/></svg>
<div style="left:989px;top:642.5px;width:14.5px;height:108.5px;border:1px solid #979797;border-radius:3px;background:linear-gradient(90deg,#f4f4f4 0,#e9e9e9 48%,#d6d6d6 52%,#cfcfcf 100%);"></div>
<div style="left:992.5px;top:693.25px;width:7px;height:1px;background:#5a5a5a;"></div>
<div style="left:992.5px;top:695.85px;width:7px;height:1px;background:#5a5a5a;"></div>
<div style="left:992.5px;top:698.45px;width:7px;height:1px;background:#5a5a5a;"></div>
<div style="left:8px;top:812px;width:996px;height:19px;background:#f0f0f0;border-top:1px solid #90939c;"></div>
<div style="left:8px;top:813px;width:996px;height:1px;background:#fbfbfb;"></div>
<div class="t s" style="left:12px;top:815.3px;letter-spacing:.1px;">Running...</div>
<div class="t s" style="left:882.5px;top:815.3px;font-size:11.3px;letter-spacing:-.22px;">14-03-2017&nbsp;&nbsp;09:03</div>
<svg style="left:991px;top:820px;" width="11" height="11" viewBox="0 0 11 11"><rect x="8" y="0" width="2" height="2" fill="#c6c9d2"/><rect x="4" y="4" width="2" height="2" fill="#c6c9d2"/><rect x="8" y="4" width="2" height="2" fill="#c6c9d2"/><rect x="0" y="8" width="2" height="2" fill="#c6c9d2"/><rect x="4" y="8" width="2" height="2" fill="#c6c9d2"/><rect x="8" y="8" width="2" height="2" fill="#c6c9d2"/></svg>
</body></html>
